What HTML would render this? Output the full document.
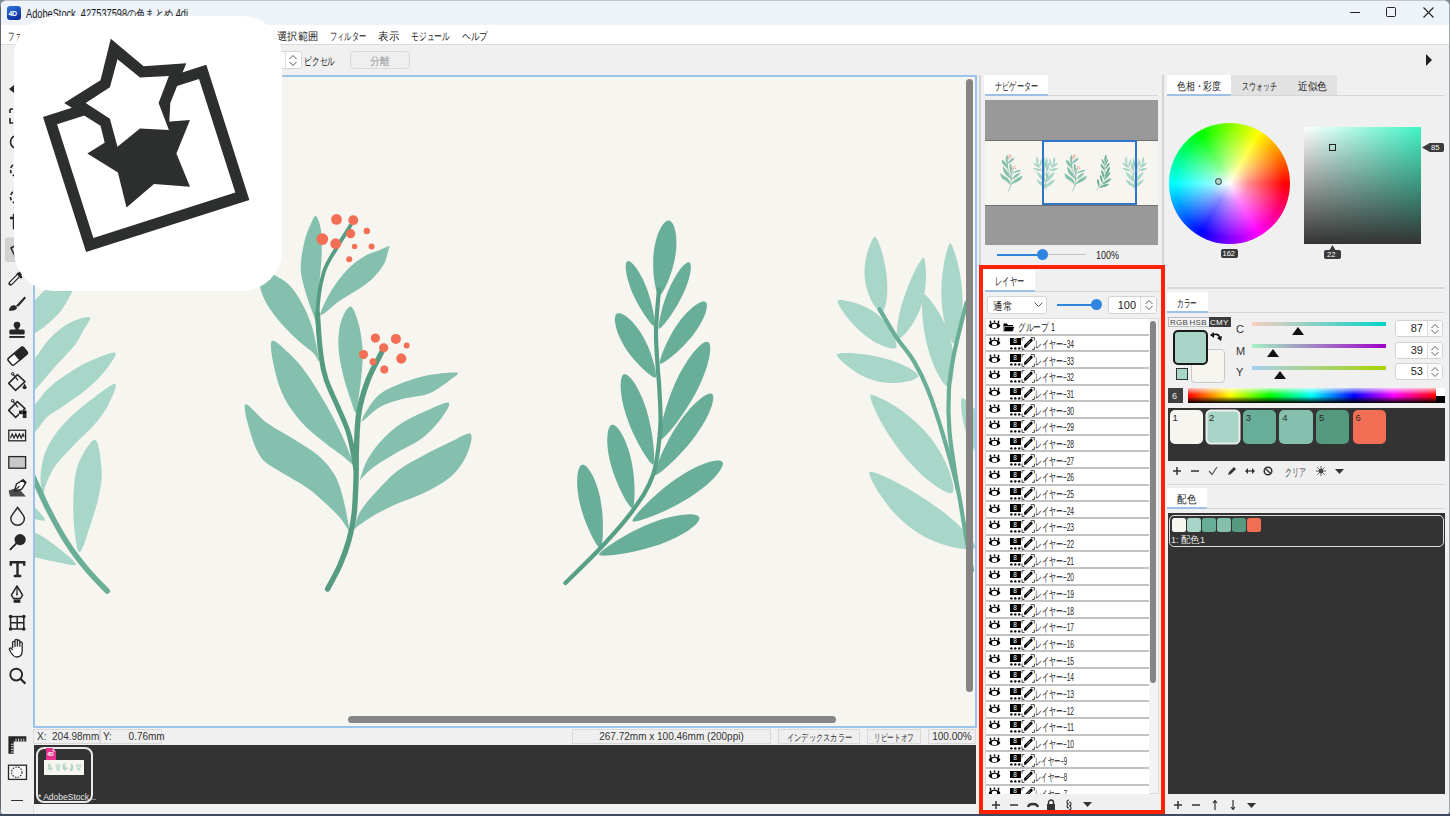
<!DOCTYPE html><html><head><meta charset="utf-8"><style>
*{box-sizing:border-box;margin:0;padding:0}
html,body{width:1450px;height:816px;overflow:hidden;background:#7f8d9b;font-family:"Liberation Sans",sans-serif;font-size:11px;color:#222}
.a{position:absolute}
.t{position:absolute;white-space:nowrap;line-height:1}
#win{position:absolute;left:0;top:0;width:1450px;height:815px;background:#f0f0f0;border-radius:8px 8px 6px 6px;overflow:hidden}
.sb{position:absolute;height:15px;border:1px solid #d9d9d9;background:#efefef;font-size:10px;color:#333;white-space:nowrap;line-height:13px;text-align:center}
</style></head><body>
<div id="win">
<div class="a" style="left:0px;top:0px;width:1450px;height:1px;background:#c3c7cc"></div>
<div class="a" style="left:0px;top:0px;width:1px;height:815px;background:#5f6670"></div>
<div class="a" style="left:1449px;top:0px;width:1px;height:815px;background:#9aa4ae"></div>
<div class="a" style="left:1px;top:1px;width:1448px;height:24px;background:#eef3fa"></div>
<div class="a" style="left:7px;top:6px;width:14px;height:14px;border-radius:3px;background:linear-gradient(160deg,#2d74da,#0a2796)"></div>
<div class="t" style="left:8.5px;top:9.5px;font-size:7px;color:#fff;font-weight:bold;letter-spacing:-0.5px">4D</div>
<svg class="a" style="left:26px;top:3.7px;overflow:visible" width="164" height="19.2"><text x="0" y="13.8" font-family="Liberation Sans, sans-serif" font-size="12" fill="#1b1b1b" textLength="162" lengthAdjust="spacingAndGlyphs" >AdobeStock_427537598の色まとめ.4di</text></svg>
<div class="a" style="left:1350px;top:12px;width:10px;height:1px;background:#222"></div>
<div class="a" style="left:1386px;top:7px;width:10px;height:10px;border:1px solid #222;border-radius:1.5px"></div>
<svg class="a" style="left:1423px;top:7px;" width="11" height="11" viewBox="0 0 11 11"><path d="M0.5,0.5L10.5,10.5M10.5,0.5L0.5,10.5" stroke="#222" stroke-width="1.1"/></svg>
<div class="a" style="left:1px;top:25px;width:1448px;height:19px;background:#fff"></div>
<div class="a" style="left:1px;top:44px;width:1448px;height:1px;background:#dcdcdc"></div>
<svg class="a" style="left:7.5px;top:27.9px;overflow:visible" width="28" height="16.8"><text x="0" y="12.1" font-family="Liberation Sans, sans-serif" font-size="10.5" fill="#1a1a1a" textLength="26" lengthAdjust="spacingAndGlyphs" >ファイル</text></svg>
<svg class="a" style="left:277px;top:27.9px;overflow:visible" width="43" height="16.8"><text x="0" y="12.1" font-family="Liberation Sans, sans-serif" font-size="10.5" fill="#1a1a1a" textLength="41" lengthAdjust="spacingAndGlyphs" >選択範囲</text></svg>
<svg class="a" style="left:330px;top:27.9px;overflow:visible" width="38" height="16.8"><text x="0" y="12.1" font-family="Liberation Sans, sans-serif" font-size="10.5" fill="#1a1a1a" textLength="36" lengthAdjust="spacingAndGlyphs" >フィルター</text></svg>
<svg class="a" style="left:378px;top:27.9px;overflow:visible" width="23" height="16.8"><text x="0" y="12.1" font-family="Liberation Sans, sans-serif" font-size="10.5" fill="#1a1a1a" textLength="21" lengthAdjust="spacingAndGlyphs" >表示</text></svg>
<svg class="a" style="left:411px;top:27.9px;overflow:visible" width="41" height="16.8"><text x="0" y="12.1" font-family="Liberation Sans, sans-serif" font-size="10.5" fill="#1a1a1a" textLength="39" lengthAdjust="spacingAndGlyphs" >モジュール</text></svg>
<svg class="a" style="left:462px;top:27.9px;overflow:visible" width="28" height="16.8"><text x="0" y="12.1" font-family="Liberation Sans, sans-serif" font-size="10.5" fill="#1a1a1a" textLength="26" lengthAdjust="spacingAndGlyphs" >ヘルプ</text></svg>
<div class="a" style="left:240px;top:51px;width:62px;height:18px;background:#fff;border:1px solid #d5d5d5;border-radius:3px"></div>
<div class="a" style="left:285px;top:52px;width:1px;height:16px;background:#e0e0e0"></div>
<svg class="a" style="left:288px;top:54px;" width="10" height="13" viewBox="0 0 10 13"><path d="M1.5,5L5,1.5L8.5,5M1.5,8L5,11.5L8.5,8" fill="none" stroke="#555" stroke-width="1"/></svg>
<svg class="a" style="left:304px;top:52.9px;overflow:visible" width="33" height="16.8"><text x="0" y="12.1" font-family="Liberation Sans, sans-serif" font-size="10.5" fill="#1a1a1a" textLength="31" lengthAdjust="spacingAndGlyphs" >ピクセル</text></svg>
<div class="a" style="left:350px;top:51px;width:60px;height:18px;border:1px solid #d8d8d8;border-radius:3px;background:#efefef"></div>
<svg class="a" style="left:370px;top:53.4px;overflow:visible" width="22" height="16.8"><text x="0" y="12.1" font-family="Liberation Sans, sans-serif" font-size="10.5" fill="#9a9a9a" textLength="20" lengthAdjust="spacingAndGlyphs" >分離</text></svg>
<svg class="a" style="left:1425px;top:54px;" width="8" height="12" viewBox="0 0 8 12"><path d="M1,0L7,6L1,12Z" fill="#222"/></svg>
<div class="a" style="left:33px;top:75px;width:943.5px;height:652.5px;border:2px solid #9cc3ea;background:#f7f5f0;overflow:hidden">
<svg class="a" style="left:-35px;top:-77px" width="1450" height="816"><g id="plants"><g id="pl1"><path d="M74,284C74.9,288.6 67.4,301.1 63.3,307.5C59.2,313.9 54.3,317.9 49.6,322.2C44.9,326.4 39.9,330.4 35,333C30.1,335.6 22.8,340.5 20,338C17.2,335.5 15.5,324.3 18,318C20.5,311.7 28.3,306.3 35,300C41.7,293.7 51.5,282.7 58,280C64.5,277.3 73.1,279.4 74,284Z" fill="#a8d6c8"/>
<path d="M89.8,317.3C92.1,318.6 85.5,326.4 83,331C80.5,335.6 79.7,338.8 75.1,344.7C70.5,350.6 62.2,358.8 55.5,366.3C48.8,373.8 41.1,383.5 34.9,389.8C28.6,396.1 20.8,406 18,404C15.2,402 15.2,385.6 18,378C20.8,370.4 29.6,364.9 34.9,358.4C40.2,351.9 43.9,344.7 49.6,338.8C55.3,332.9 62.5,326.7 69.2,323.1C75.9,319.5 87.5,316 89.8,317.3Z" fill="#a8d6c8"/>
<path d="M115.3,352.7C117.9,354.3 109.2,365.3 104.5,371.4C99.8,377.4 93.4,383.4 86.9,389C80.4,394.6 71.8,400.1 65.3,404.7C58.8,409.3 52.7,411.9 47.6,416.5C42.5,421.1 39.8,427.3 34.9,432.2C30,437.1 20.8,448 18,446C15.2,444 15.2,426.9 18,420C20.8,413.1 30,409.9 34.9,404.7C39.8,399.5 42.5,393.9 47.6,389C52.7,384.1 58.4,379.9 65.3,375.3C72.2,370.7 80.5,365.4 88.8,361.6C97.1,357.8 112.7,351.1 115.3,352.7Z" fill="#a8d6c8"/>
<path d="M115.3,384.1C117.6,385.4 111.8,398 108.4,404.7C105,411.4 100.6,417.4 94.7,424.3C88.8,431.2 79.6,439 73.1,445.9C66.6,452.8 60.1,459 55.5,465.5C50.9,472 47.8,479.9 45.7,485.1C43.7,490.4 44,496.9 43.2,497C42.4,497.1 41.4,489.9 41,486C40.6,482.1 40.2,478.7 40.8,473.3C41.4,467.9 42.2,460.2 44.7,453.7C47.2,447.2 50.8,440.6 55.5,434.1C60.2,427.6 66.6,420.7 73.1,414.5C79.6,408.3 87.7,402 94.7,396.9C101.7,391.8 113,382.8 115.3,384.1Z" fill="#a8d6c8"/>
<path d="M95.1,439.9C99,440.7 101,460.8 101.7,470C102.4,479.2 100.6,486.7 99,495C97.4,503.3 95.2,510.5 92,520C88.8,529.5 82.9,550.3 80,552C77.1,553.7 75.6,539.2 74.5,530C73.4,520.8 72.9,507.8 73.5,497C74.1,486.2 74.4,474.5 78,465C81.6,455.5 91.1,439.1 95.1,439.9Z" fill="#a8d6c8"/>
<path d="M20,530C22.4,526.8 29.1,530.4 34.4,532.6C39.7,534.8 45.1,537.8 52,543C58.9,548.2 75.2,560.8 76,564C76.8,567.2 63.4,563.2 56.5,562C49.6,560.8 40.5,558.7 34.4,557C28.3,555.3 22.4,556.5 20,552C17.6,547.5 17.6,533.2 20,530Z" fill="#a8d6c8"/>
<path d="M25,495C27,494 30.7,501.8 34,506C37.3,510.2 45.3,518 45,520C44.7,522 35.8,519.3 32,518C28.2,516.7 23.2,515.8 22,512C20.8,508.2 23,496 25,495Z" fill="#a8d6c8"/>
<path d="M22,455C24.1,459.1 30.1,470.7 34.4,479.6C38.7,488.5 42.2,497.6 47.7,508.3C53.2,519 60.9,533.3 67.5,543.6C74.1,553.9 80.8,562.2 87.4,570.1C94,578 104,587.6 107.3,591.1" fill="none" stroke="#6aae98" stroke-width="5.5" stroke-linecap="round" stroke-linejoin="round"/>
</g><g id="pl2">
<path d="M316,216.2C317.7,217.1 319.9,223.4 320.9,229.7C321.8,236 321.9,245.4 321.7,253.9C321.5,262.4 320.3,272.8 319.6,280.9C318.9,289 318.1,295.8 317.7,302.5C317.2,309.2 317.7,319.6 316.9,321.4C316.1,323.2 314.8,318.7 312.8,313.3C310.8,307.9 306.7,296.6 304.7,289C302.7,281.4 300.7,275.5 300.7,267.4C300.7,259.3 303,247.7 304.7,240.5C306.4,233.3 308.8,228.4 310.7,224.3C312.6,220.2 314.3,215.3 316,216.2Z" fill="#84c0ad"/>
<path d="M388.9,246.3C387.4,246.2 383,248.8 379.3,250.2C375.6,251.6 370.9,252.7 366.6,255C362.4,257.3 357.8,260.5 353.8,263.8C349.8,267.1 346.1,271 342.6,275C339.2,279 336,283.2 333.1,287.7C330.2,292.2 327.2,297.6 325.1,302.1C323,306.6 320,313.2 320.3,314.8C320.6,316.4 323.8,313.7 326.7,311.6C329.6,309.5 333.8,305 337.8,302.1C341.8,299.2 346.3,296.8 350.6,294.1C354.9,291.4 359.4,289 363.4,286.1C367.4,283.2 371.1,280.3 374.5,276.6C377.9,272.9 381.8,268.1 384.1,263.8C386.4,259.5 387.3,253.9 388.1,251C388.9,248.1 390.4,246.4 388.9,246.3Z" fill="#84c0ad"/>
<path d="M262,270C264.4,268.4 269.8,272.4 274.3,274.9C278.8,277.3 284.5,280.2 289,284.7C293.5,289.2 297.6,295.4 301.3,301.9C305,308.4 308.7,317 311.1,323.9C313.6,330.8 314.7,337.3 316,343.5C317.3,349.7 319.4,359.4 319,361C318.6,362.6 316.9,356.6 313.5,353.3C310.1,350 304.1,346 298.8,341.1C293.5,336.2 287,330 281.7,323.9C276.4,317.8 270.7,310.8 267,304.3C263.3,297.8 260.4,290.4 259.6,284.7C258.8,279 259.6,271.6 262,270Z" fill="#84c0ad"/>
<path d="M350.6,306.5C353.5,306.9 356.7,316.7 358.7,324.1C360.7,331.5 362.2,342.5 362.7,351C363.1,359.5 362.1,367.7 361.4,375.3C360.7,382.9 359.6,390.6 358.7,396.9C357.8,403.2 357.4,412.6 356,413C354.6,413.4 352.9,406.3 350.6,399.6C348.4,392.9 344.5,381.6 342.5,372.6C340.5,363.6 338.6,354.1 338.4,345.6C338.2,337.1 339.1,327.9 341.1,321.4C343.1,314.9 347.7,306.1 350.6,306.5Z" fill="#84c0ad"/>
<path d="M271.9,341.1C274.3,338.7 283.3,348 289,353.3C294.7,358.6 300.5,365.1 306.2,372.9C311.9,380.7 318,390.9 323.3,399.9C328.6,408.9 333.9,418.7 338,426.9C342.1,435.1 345.3,442.7 347.8,448.9C350.3,455.1 353.8,462.8 353,464C352.2,465.2 347.9,460 343,456.3C338.1,452.6 330.2,447.3 323.3,441.6C316.4,435.9 307.8,429.4 301.3,422C294.8,414.6 288.6,406.5 284.1,397.5C279.6,388.5 276.3,377.4 274.3,368C272.3,358.6 269.4,343.6 271.9,341.1Z" fill="#84c0ad"/>
<path d="M245.4,404.3C248.1,402.5 258.9,417.3 267,423.1C275.1,428.9 285.4,433.9 293.9,439.3C302.4,444.7 311.4,449.6 318.2,455.5C324.9,461.4 330.3,467.6 334.4,474.4C338.4,481.1 340,487 342.5,496C345,505 348.5,523.1 349.2,528.3C349.9,533.5 348.1,528.8 346.5,527C344.9,525.2 343.2,521.3 339.8,517.5C336.4,513.7 331.7,509 326.3,504.1C320.9,499.2 315,493.3 307.4,487.9C299.8,482.5 288.1,476.6 280.5,471.7C272.9,466.8 266.6,464.5 261.6,458.2C256.7,451.9 253.5,442.9 250.8,433.9C248.1,424.9 242.7,406.1 245.4,404.3Z" fill="#84c0ad"/>
<path d="M457,372.6C453.5,371.8 438.2,373.3 429,375C419.8,376.7 410.2,379.8 402,383C393.8,386.2 385.8,389.5 380,394C374.2,398.5 370,405.7 367,410C364,414.3 362.5,418.3 362,420C361.5,421.7 361,422.2 364,420C367,417.8 373.7,410.5 380,407C386.3,403.5 393.8,401.2 402,399C410.2,396.8 421,396.7 429,393.5C437,390.3 445.3,383.5 450,380C454.7,376.5 460.5,373.4 457,372.6Z" fill="#84c0ad"/>
<path d="M449,402.9C447.2,401.1 436.7,406.3 428.8,409.7C420.9,413.1 409.9,417.7 401.8,423.1C393.7,428.5 386,435.7 380.2,442C374.4,448.3 370.2,454.6 366.8,460.9C363.4,467.2 360.7,477.1 360,479.8C359.3,482.5 360.2,479.4 362.7,477.1C365.2,474.9 369.2,470.4 374.8,466.3C380.4,462.2 388.8,457.3 396.4,452.8C404,448.3 413.5,444.7 420.7,439.3C427.9,433.9 434.9,426.6 439.6,420.5C444.3,414.4 450.8,404.7 449,402.9Z" fill="#84c0ad"/>
<path d="M470.6,433.9C467.9,431.6 458.3,438.4 450.4,442C442.5,445.6 432.4,450.6 423.4,455.5C414.4,460.4 404.5,465.4 396.4,471.7C388.3,478 380.9,486.6 374.8,493.3C368.7,500 363.4,506.3 360,512.1C356.6,517.9 354.8,526 354.6,528.3C354.4,530.5 355.3,527.9 358.7,525.6C362.1,523.4 368.5,518.4 374.8,514.8C381.1,511.2 388.3,507.7 396.4,504.1C404.5,500.5 414.4,497.8 423.4,493.3C432.4,488.8 443.2,483.4 450.4,477.1C457.6,470.8 463.1,462.7 466.5,455.5C469.9,448.3 473.3,436.1 470.6,433.9Z" fill="#84c0ad"/>
<path d="M327.6,589C329.7,585 336.4,573.2 340,565C343.6,556.8 346.7,548.3 349,540C351.3,531.7 352.8,525 354,515C355.2,505 355.6,491.3 356,480C356.4,468.7 356,458.3 356.5,447C357,435.7 357.1,423.2 359,412C360.9,400.8 364.2,389.9 368,380C371.8,370.1 379.3,357 381.6,352.4" fill="none" stroke="#559c83" stroke-width="5.4" stroke-linecap="round" stroke-linejoin="round"/>
<path d="M356,470C354.6,463.5 352.8,446 347.9,431C342.9,416 330.9,393.3 326.3,380C321.7,366.7 322,362.2 320.5,351C319,339.8 318,319.3 317.5,313" fill="none" stroke="#559c83" stroke-width="5" stroke-linecap="round" stroke-linejoin="round"/>
<path d="M320.5,351C320,344.7 317,326 317.5,313C318,300 320.3,283.8 323.6,272.8C326.9,261.8 332.6,255.1 337.1,247.2C341.6,239.3 348.4,229.2 350.6,225.6" fill="none" stroke="#559c83" stroke-width="3.8" stroke-linecap="round" stroke-linejoin="round"/>
<circle cx="336.5" cy="219.4" r="5.4" fill="#f26e55"/>
<circle cx="353.3" cy="220.2" r="4.9" fill="#f26e55"/>
<circle cx="322.3" cy="239.1" r="5.9" fill="#f26e55"/>
<circle cx="335.7" cy="243.7" r="5.4" fill="#f26e55"/>
<circle cx="350.6" cy="233.7" r="4.6" fill="#f26e55"/>
<circle cx="366.8" cy="231" r="3.2" fill="#f26e55"/>
<circle cx="354.6" cy="246.4" r="2.7" fill="#f26e55"/>
<circle cx="371.6" cy="246.4" r="3" fill="#f26e55"/>
<circle cx="349.2" cy="259.3" r="3" fill="#f26e55"/>
<circle cx="375.4" cy="338.1" r="4.6" fill="#f26e55"/>
<circle cx="395.9" cy="338.9" r="5" fill="#f26e55"/>
<circle cx="406.7" cy="345.6" r="3" fill="#f26e55"/>
<circle cx="383.7" cy="347.8" r="4.6" fill="#f26e55"/>
<circle cx="363.5" cy="354.5" r="4.6" fill="#f26e55"/>
<circle cx="373" cy="361.8" r="3.5" fill="#f26e55"/>
<circle cx="401.3" cy="358.6" r="5.1" fill="#f26e55"/>
<circle cx="384.3" cy="369.4" r="4" fill="#f26e55"/>
</g><g id="pl3">
<path d="M659,296.2L659.6,295.9L660.5,295.1L661.7,293.6L663,291.6L664.4,289L666,285.8L667.6,282.3L669.2,278.3L670.7,274L672.2,269.4L673.5,264.6L674.7,259.8L675.5,254.8L676.1,250L676.4,245.3L676.4,240.7L676.2,236.5L675.6,232.7L674.9,229.2L674,226.3L672.9,223.9L671.7,222.2L670.4,221L669,220.5L667.5,220.6L666,221.4L664.3,222.8L662.7,224.8L661,227.4L659.4,230.5L657.9,234.1L656.6,238.1L655.4,242.5L654.5,247.1L653.8,252L653.3,256.9L653.2,261.9L653.2,266.9L653.4,271.7L653.8,276.3L654.3,280.5L655,284.4L655.6,287.8L656.3,290.7L657.1,293L657.8,294.7L658.5,295.8Z" fill="#68ae98"/>
<path d="M654.3,326.4L654.5,326L654.7,324.9L654.7,323.3L654.6,321.2L654.3,318.5L653.9,315.4L653.3,311.9L652.5,308.1L651.5,304L650.4,299.8L649.1,295.4L647.7,291L646.1,286.7L644.3,282.5L642.5,278.6L640.5,274.9L638.5,271.6L636.6,268.6L634.7,266.1L632.9,264.1L631.2,262.6L629.8,261.6L628.5,261.1L627.5,261.2L626.7,261.9L626.1,263.1L625.8,264.8L625.7,267L625.9,269.7L626.3,272.9L626.9,276.3L627.9,280.1L629.1,284.1L630.5,288.2L632.2,292.4L634.1,296.6L636.2,300.7L638.3,304.7L640.5,308.5L642.7,312.1L644.9,315.4L646.9,318.3L648.7,320.8L650.4,322.9L651.8,324.5L653,325.6L653.8,326.3Z" fill="#68ae98"/>
<path d="M659,328.8L659.5,328.7L660.4,328.1L661.6,326.9L663.1,325.3L664.9,323.2L666.9,320.7L669.1,317.7L671.4,314.4L673.8,310.8L676.2,306.9L678.6,302.8L680.8,298.6L682.9,294.4L684.9,290.1L686.5,285.9L687.9,281.8L689.1,278L689.9,274.4L690.5,271.2L690.8,268.5L690.8,266.1L690.6,264.4L690.1,263.1L689.3,262.4L688.3,262.3L687,262.7L685.5,263.7L683.7,265.2L681.8,267.3L679.8,269.8L677.7,272.8L675.5,276.2L673.4,279.9L671.3,283.9L669.3,288.2L667.5,292.6L665.8,297L664.3,301.5L662.9,305.8L661.8,310L660.8,313.9L660,317.5L659.4,320.7L658.9,323.4L658.7,325.6L658.7,327.3L658.8,328.4Z" fill="#68ae98"/>
<path d="M655.5,377.7L655.8,377.1L656,375.9L655.9,374.1L655.7,371.8L655.2,368.9L654.4,365.6L653.4,361.9L652.2,357.9L650.8,353.6L649.1,349.2L647.2,344.8L645.1,340.4L642.7,336.1L640.2,332L637.6,328.2L634.8,324.7L632.1,321.6L629.3,319L626.7,316.8L624.2,315.1L622,313.9L620,313.3L618.4,313.2L617,313.6L616,314.6L615.3,316.1L614.9,318.2L614.9,320.7L615.3,323.7L616,327L617,330.7L618.4,334.6L620.2,338.6L622.3,342.7L624.7,346.9L627.4,350.9L630.3,354.9L633.4,358.7L636.5,362.2L639.5,365.5L642.5,368.4L645.3,371L647.9,373.3L650.2,375.1L652.1,376.4L653.7,377.3L654.9,377.7Z" fill="#68ae98"/>
<path d="M660.1,363.7L660.7,363.7L661.8,363.4L663.5,362.5L665.5,361.3L667.9,359.6L670.6,357.5L673.6,355L676.9,352.2L680.2,349.1L683.6,345.8L687,342.1L690.3,338.4L693.5,334.5L696.3,330.5L698.9,326.5L701.2,322.6L703.1,318.8L704.6,315.2L705.8,312L706.5,309L706.9,306.6L706.8,304.5L706.4,303L705.6,302L704.4,301.5L702.8,301.6L700.9,302.1L698.6,303.2L696,304.8L693.3,306.8L690.3,309.4L687.3,312.3L684.2,315.6L681.1,319.3L678.2,323.2L675.4,327.3L672.7,331.6L670.3,335.9L668.1,340.2L666.1,344.3L664.4,348.2L662.9,351.8L661.7,355L660.8,357.8L660.2,360.2L659.9,361.9L659.9,363.1Z" fill="#68ae98"/>
<path d="M660,440L660.7,439.8L662.1,439L664,437.3L666.4,435L669.1,431.9L672.3,428.2L675.7,423.9L679.3,419.1L683,413.8L686.8,408.1L690.5,402.1L694.1,395.9L697.4,389.7L700.5,383.3L703.1,377.1L705.4,371.1L707.2,365.4L708.6,360.1L709.6,355.3L710.1,351.2L710.2,347.7L709.9,345L709.2,343.1L708,342L706.4,341.8L704.5,342.3L702.1,343.7L699.4,345.9L696.5,348.9L693.3,352.6L690,356.9L686.6,361.9L683.2,367.4L679.9,373.3L676.8,379.6L673.9,386.1L671.2,392.7L668.8,399.3L666.6,405.7L664.7,411.9L663.1,417.8L661.8,423.1L660.8,427.8L660.1,431.9L659.6,435.2L659.5,437.7L659.7,439.3Z" fill="#68ae98"/>
<path d="M653,464.7L653.4,464.1L653.8,462.8L654,460.6L654.1,457.7L654,454.1L653.8,449.8L653.4,445.1L652.8,439.8L652,434.2L651,428.4L649.7,422.4L648.3,416.3L646.6,410.3L644.7,404.6L642.6,399L640.4,393.9L638,389.2L635.7,385.1L633.3,381.5L631.1,378.6L629,376.4L627.1,374.9L625.4,374.2L624,374.2L622.8,375L621.9,376.6L621.2,378.9L620.8,381.9L620.6,385.6L620.8,389.8L621.3,394.6L622.1,399.7L623.3,405.2L624.8,410.9L626.6,416.7L628.7,422.6L631,428.4L633.5,434L636.1,439.3L638.7,444.3L641.3,448.9L643.7,453.1L646,456.6L648,459.6L649.8,461.9L651.3,463.6L652.4,464.5Z" fill="#68ae98"/>
<path d="M655,475L655.7,475L657,474.4L659,473.2L661.4,471.4L664.4,469.1L667.7,466.2L671.4,462.8L675.3,459L679.4,454.8L683.6,450.3L687.8,445.4L691.9,440.4L695.8,435.2L699.4,430L702.7,424.8L705.6,419.8L708,414.9L710,410.4L711.6,406.2L712.6,402.6L713.2,399.5L713.3,397L712.9,395.1L712,394L710.6,393.5L708.8,393.8L706.5,394.7L703.7,396.3L700.7,398.5L697.3,401.4L693.7,404.8L689.9,408.7L686.1,413.2L682.3,418L678.6,423.2L675.1,428.6L671.8,434.1L668.6,439.7L665.8,445.2L663.2,450.5L660.9,455.5L659,460.1L657.4,464.2L656.2,467.7L655.4,470.6L654.9,472.9L654.8,474.3Z" fill="#68ae98"/>
<path d="M632.4,508.4L632.8,507.9L633.3,506.7L633.8,504.7L634.1,502L634.4,498.7L634.5,494.9L634.6,490.5L634.4,485.7L634.1,480.6L633.7,475.2L633,469.7L632.1,464.1L630.9,458.6L629.6,453.3L628,448.2L626.2,443.4L624.4,439.1L622.4,435.2L620.4,431.8L618.5,429.1L616.6,427L614.8,425.6L613.2,424.8L611.8,424.8L610.5,425.5L609.5,426.9L608.6,429L607.9,431.7L607.5,435L607.2,438.9L607.3,443.3L607.7,448L608.3,453L609.3,458.3L610.6,463.7L612.1,469.1L613.9,474.4L615.9,479.6L617.9,484.6L620.1,489.3L622.2,493.6L624.2,497.4L626.1,500.8L627.9,503.6L629.5,505.8L630.8,507.3L631.8,508.2Z" fill="#68ae98"/>
<path d="M632.4,521.3L633.1,521.5L634.7,521.5L637.2,521.1L640.4,520.3L644.3,519.1L648.8,517.5L653.9,515.5L659.4,513.3L665.2,510.7L671.3,507.7L677.5,504.5L683.6,501.1L689.6,497.4L695.4,493.6L700.8,489.6L705.7,485.7L710.2,481.7L714,477.9L717.2,474.3L719.7,471L721.5,468.1L722.6,465.6L722.9,463.6L722.5,462.1L721.3,461.1L719.3,460.6L716.6,460.6L713.2,461.1L709.2,462.1L704.6,463.6L699.6,465.6L694.2,468.1L688.6,471.1L682.8,474.5L677,478.2L671.3,482.3L665.7,486.6L660.3,491L655.2,495.4L650.5,499.7L646.2,503.9L642.4,507.8L639.2,511.3L636.5,514.4L634.5,517L633.1,519.1L632.5,520.6Z" fill="#68ae98"/>
<path d="M600.2,548.3L600.6,547.8L601.2,546.6L601.7,544.7L602.1,542L602.5,538.8L602.8,534.9L602.9,530.6L602.9,525.8L602.8,520.7L602.5,515.4L602,509.9L601.2,504.3L600.3,498.8L599.1,493.5L597.7,488.4L596.1,483.6L594.3,479.2L592.5,475.3L590.6,471.9L588.7,469.2L586.9,467L585.2,465.5L583.6,464.8L582.2,464.7L580.9,465.3L579.8,466.7L578.9,468.7L578.1,471.4L577.5,474.7L577.2,478.6L577.1,482.9L577.3,487.6L577.9,492.6L578.7,497.9L579.8,503.3L581.2,508.7L582.8,514L584.6,519.2L586.5,524.3L588.5,529L590.5,533.3L592.4,537.2L594.2,540.6L595.9,543.4L597.3,545.6L598.6,547.2L599.6,548.1Z" fill="#68ae98"/>
<path d="M598.9,554.8L599.5,555.2L601.1,555.5L603.6,555.7L606.9,555.6L610.9,555.3L615.6,554.8L621,554L626.8,553L633.1,551.8L639.6,550.3L646.3,548.6L653,546.6L659.7,544.4L666.1,542L672.2,539.3L677.9,536.6L683,533.7L687.6,530.9L691.5,528.1L694.7,525.5L697.1,523.1L698.6,520.9L699.4,519L699.3,517.4L698.3,516.1L696.5,515.2L693.9,514.6L690.5,514.3L686.4,514.4L681.6,514.9L676.3,515.7L670.5,516.9L664.4,518.5L658.1,520.5L651.6,522.9L645.2,525.6L638.8,528.5L632.6,531.5L626.7,534.7L621.2,537.9L616.1,540.9L611.6,543.9L607.7,546.6L604.4,549L601.9,551.1L600.1,552.8L599.1,554.1Z" fill="#68ae98"/>
<path d="M659,289C658.5,296 656.2,317.8 656,331C655.8,344.2 657.2,358.6 657.8,368.4C658.4,378.2 659,380 659.4,390C659.8,400 661.3,414.4 660.2,428.6C659.1,442.8 657.6,461.3 653,475C648.4,488.7 641,499 632.4,511C623.8,523 612.7,535 601.5,547C590.3,559 571.4,577 565.4,583" fill="none" stroke="#579f87" stroke-width="4.2" stroke-linecap="round" stroke-linejoin="round"/>
</g><g id="pl4">
<path d="M881.5,312.6L882.2,312.2L883.1,311.2L884,309.5L884.9,307.2L885.7,304.3L886.4,300.9L886.9,297.1L887.2,292.9L887.3,288.4L887.2,283.7L886.9,278.8L886.4,273.8L885.7,268.9L884.8,264L883.8,259.4L882.8,255L881.6,250.9L880.4,247.2L879.2,244L878.1,241.3L877,239.2L876.1,237.7L875.3,236.8L874.8,236.5L874.3,236.9L873.5,237.9L872.4,239.6L871.3,241.9L870,244.8L868.8,248.3L867.5,252.1L866.4,256.4L865.5,261L864.8,265.8L864.5,270.7L864.6,275.7L865.1,280.7L865.9,285.6L867.2,290.2L868.7,294.6L870.4,298.6L872.3,302.2L874.2,305.3L876.1,307.9L877.8,310L879.4,311.5L880.6,312.3Z" fill="#a8d6c8"/>
<path d="M898.3,339L899.1,338.9L900.4,338.1L902.1,336.8L904.2,334.8L906.4,332.3L908.9,329.2L911.5,325.6L914,321.5L916.5,317.1L918.8,312.2L920.8,307.1L922.5,301.8L923.8,296.4L924.8,291L925.5,285.7L925.8,280.5L926,275.7L925.9,271.3L925.7,267.4L925.3,264L924.9,261.3L924.5,259.3L924,258L923.7,257.5L923.2,257.7L922.3,258.6L921.1,260.1L919.7,262.2L918,265L916.2,268.3L914.3,272.1L912.3,276.3L910.3,280.9L908.3,285.8L906.3,290.9L904.4,296.2L902.7,301.5L901.1,306.8L899.8,311.9L898.7,316.8L897.9,321.4L897.3,325.6L897,329.3L896.9,332.6L897,335.2L897.3,337.2L897.8,338.5Z" fill="#a8d6c8"/>
<path d="M896.1,347.9L896.4,347L896.5,345.4L896.2,343.2L895.5,340.6L894.5,337.6L893,334.2L891.2,330.6L888.9,326.9L886.2,323.3L883.1,319.7L879.6,316.3L875.9,313.2L871.8,310.4L867.5,308L863.2,305.9L858.9,304.2L854.8,302.8L850.9,301.7L847.4,300.9L844.3,300.4L841.7,300.1L839.7,300.1L838.3,300.3L837.7,300.5L837.6,301.1L837.9,302.3L838.5,304.1L839.6,306.2L841,308.8L842.9,311.6L845.1,314.7L847.7,318.1L850.6,321.5L853.7,325L857.2,328.4L860.8,331.7L864.6,334.9L868.4,337.8L872.3,340.4L876.1,342.7L879.8,344.6L883.3,346.1L886.6,347.3L889.4,348.1L891.9,348.5L893.9,348.6L895.3,348.3Z" fill="#a8d6c8"/>
<path d="M918.2,376.5L918.1,375.6L917.3,374.3L915.9,372.8L913.8,371L911.1,369.2L907.9,367.3L904.1,365.4L899.8,363.5L895.2,361.7L890.2,360.1L885,358.6L879.6,357.2L874.2,356.1L868.9,355.1L863.7,354.3L858.7,353.7L854.1,353.3L849.8,353L846.1,352.9L842.9,353L840.3,353.3L838.3,353.7L837.1,354.1L836.6,354.5L836.8,355.2L837.6,356.4L838.9,358.2L840.9,360.3L843.4,362.7L846.5,365.3L850.1,368.1L854.1,370.9L858.4,373.7L863.2,376.2L868.2,378.5L873.4,380.3L878.7,381.7L884.1,382.6L889.4,383.1L894.5,383.1L899.4,382.8L903.9,382.1L907.9,381.3L911.3,380.4L914.1,379.3L916.2,378.3L917.6,377.3Z" fill="#a8d6c8"/>
<path d="M953.5,343.5L954.2,343L955.2,341.7L956.3,339.6L957.5,336.6L958.6,332.9L959.7,328.6L960.7,323.6L961.5,318.1L962.1,312.2L962.5,306L962.5,299.5L962.3,293L961.8,286.4L961,280L960,273.8L958.8,267.9L957.6,262.5L956.3,257.6L954.9,253.3L953.7,249.7L952.5,246.8L951.5,244.8L950.7,243.5L950.2,243.1L949.7,243.5L949,244.9L948.1,247L947.2,249.9L946.1,253.6L945.1,258L944.1,263L943.2,268.5L942.4,274.4L941.8,280.6L941.5,287.1L941.4,293.6L941.6,300.2L942.1,306.6L942.8,312.8L943.8,318.7L945,324.1L946.3,329L947.7,333.3L949.1,336.9L950.4,339.8L951.6,341.8L952.7,343.1Z" fill="#a8d6c8"/>
<path d="M949,387.5L949.7,386.9L950.7,385.3L951.5,383L952.4,379.9L953,376L953.5,371.6L953.8,366.6L953.8,361.1L953.4,355.3L952.6,349.3L951.4,343.2L949.8,337.1L947.7,331.1L945.4,325.3L942.8,319.8L940,314.6L937.2,309.9L934.4,305.7L931.8,302.1L929.4,299.1L927.3,296.7L925.6,295.1L924.4,294.2L923.7,293.9L923.3,294.4L922.8,295.8L922.5,298.1L922.2,301L922,304.7L922.1,309L922.3,313.9L922.7,319.3L923.4,325L924.2,331L925.3,337.1L926.7,343.3L928.3,349.4L930.1,355.4L932.1,361.1L934.2,366.4L936.5,371.2L938.7,375.6L940.9,379.3L943,382.4L945,384.8L946.7,386.4L948.1,387.3Z" fill="#a8d6c8"/>
<path d="M952.6,493L953.2,491.8L953.4,489.5L953.2,486.2L952.4,482L951.2,477L949.3,471.3L946.9,465.2L943.8,458.6L940.2,451.9L935.9,445.2L931.1,438.5L925.7,432.1L920,426L913.9,420.4L907.7,415.2L901.6,410.6L895.6,406.6L889.9,403.1L884.8,400.2L880.2,397.9L876.4,396.3L873.5,395.3L871.4,394.8L870.5,394.9L870.3,395.8L870.5,397.7L871.3,400.6L872.6,404.3L874.5,408.8L876.9,414L879.8,419.7L883.3,425.9L887.2,432.4L891.5,439.1L896.3,445.9L901.3,452.5L906.6,459L912.1,465.1L917.6,470.8L923.1,476L928.5,480.6L933.6,484.5L938.3,487.7L942.6,490.2L946.2,492L949.2,493L951.4,493.3Z" fill="#a8d6c8"/>
<path d="M975,548L975.2,546.8L974.6,544.7L973.3,541.9L971,538.6L968,534.7L964.1,530.4L959.5,525.9L954.3,521L948.4,516.1L942.1,511.1L935.3,506.2L928.3,501.3L921.2,496.7L914.1,492.3L907.2,488.1L900.5,484.4L894.1,481L888.3,478.2L883.1,475.8L878.6,474L874.8,472.8L872,472.1L870,471.9L869.2,472.1L869.2,473.1L869.7,475.2L870.9,478.2L872.7,482.1L875.2,486.8L878.4,492L882.2,497.7L886.6,503.8L891.5,509.9L897.1,516L903.2,521.8L909.8,527.2L916.7,532.1L923.9,536.4L931.3,540L938.5,543L945.6,545.3L952.2,547.1L958.2,548.3L963.5,549L968,549.3L971.4,549.2L973.8,548.7Z" fill="#a8d6c8"/>
<path d="M995,470L995.6,469.4L996.1,468L996.6,466L996.8,463.3L996.8,460.2L996.6,456.5L996,452.5L995.2,448.1L994,443.6L992.5,438.9L990.6,434.1L988.5,429.4L986,424.9L983.4,420.5L980.6,416.4L977.7,412.6L974.9,409.1L972.1,406.1L969.6,403.5L967.3,401.4L965.4,399.8L963.8,398.7L962.6,398.1L962,398L961.7,398.5L961.4,399.8L961.2,401.7L961.1,404.3L961.2,407.4L961.5,411L962,415L962.8,419.4L963.8,424.1L965.1,428.9L966.7,433.7L968.5,438.6L970.7,443.3L973.1,447.8L975.6,452L978.3,455.9L981.1,459.3L983.8,462.4L986.4,465L988.8,467L990.9,468.6L992.7,469.6L994.1,470Z" fill="#a8d6c8"/>
<path d="M879.6,309.3C882.4,313.9 890.4,328.2 896.1,336.8C901.8,345.4 908.5,352.2 913.8,361.1C919.1,370 923.2,377.8 928,390C932.8,402.2 937.9,417.8 942.8,434.1C947.7,450.4 954,473.3 957.5,488C961,502.7 961.2,508.7 963.6,522.4C966,536.1 970.6,562.1 972,570" fill="none" stroke="#6aae98" stroke-width="4.2" stroke-linecap="round" stroke-linejoin="round"/>
<path d="M966.5,303C966,305 965.6,305.9 963.4,314.8C961.2,323.8 955.9,344.2 953.5,356.7C951.1,369.2 949.6,377.5 948.9,390C948.2,402.5 948.1,415.4 949.5,431.7C950.9,448 956.2,478.6 957.5,488" fill="none" stroke="#6aae98" stroke-width="4.2" stroke-linecap="round" stroke-linejoin="round"/></g></g></svg>
<div class="a" style="left:931px;top:2px;width:7px;height:613px;border-radius:4px;background:#858585"></div>
<div class="a" style="left:313px;top:639px;width:488px;height:7px;border-radius:4px;background:#858585"></div>
</div>
<div class="sb" style="left:33px;top:729px;width:67px;text-align:left;padding-left:3px">X:&nbsp; 204.98mm</div>
<div class="sb" style="left:100px;top:729px;width:62px;text-align:left;padding-left:2px">Y:&nbsp;&nbsp;&nbsp;&nbsp;&nbsp; 0.76mm</div>
<div class="sb" style="left:572px;top:729px;width:199px">267.72mm x 100.46mm (200ppi)</div>
<div class="sb" style="left:778px;top:729px;width:82px"></div>
<svg class="a" style="left:787px;top:729px;overflow:visible" width="67" height="16"><text x="0" y="11.5" font-family="Liberation Sans, sans-serif" font-size="10" fill="#333" textLength="65" lengthAdjust="spacingAndGlyphs" >インデックスカラー</text></svg>
<div class="sb" style="left:867px;top:729px;width:54px"></div>
<svg class="a" style="left:874px;top:729px;overflow:visible" width="42" height="16"><text x="0" y="11.5" font-family="Liberation Sans, sans-serif" font-size="10" fill="#333" textLength="40" lengthAdjust="spacingAndGlyphs" >リピートオフ</text></svg>
<div class="sb" style="left:928px;top:729px;width:48px">100.00%</div>
<div class="a" style="left:34px;top:745px;width:942px;height:59px;background:#333"></div>
<div class="a" style="left:35.5px;top:746.5px;width:57px;height:56px;border:2px solid #eaeaea;border-radius:8px"></div>
<div class="a" style="left:44px;top:759.7px;width:40px;height:15.1px;background:#f7f5f0"></div>
<svg class="a" style="left:44px;top:759.7px" width="40" height="15.1"><g transform="translate(12.85,-1.74) scale(0.0226)"><use href="#pl2"/><use href="#pl3"/><use href="#pl4full"/><use href="#pl2" transform="translate(-658,0)"/><use href="#pl4full" transform="translate(-911,0)"/></g></svg>
<svg class="a" style="left:45.5px;top:748px;" width="10" height="12" viewBox="0 0 10 12"><path d="M0,0H6.5L10,3.5V12H0Z" fill="#e6318c"/><path d="M6.5,0V3.5H10" fill="#f7a8cf"/><text x="1.2" y="7.6" font-size="5" font-weight="bold" fill="#fff" font-family="Liberation Sans, sans-serif">4D</text></svg>
<div class="t" style="left:38px;top:793px;font-size:8.5px;color:#e8e8e8;">* AdobeStock...</div>
<div class="a" style="left:34px;top:804px;width:942px;height:10px;background:#f2f2f2"></div>
<div class="a" style="left:33px;top:804px;width:1px;height:10px;background:#ddd"></div>
<div class="a" style="left:979px;top:75px;width:2px;height:190px;background:#d4d4d4"></div>
<div class="a" style="left:1162px;top:75px;width:2px;height:190px;background:#d4d4d4"></div>
<div class="a" style="left:984px;top:75px;width:64px;height:20px;background:#fff"></div>
<svg class="a" style="left:995px;top:77.9px;overflow:visible" width="45" height="16.8"><text x="0" y="12.1" font-family="Liberation Sans, sans-serif" font-size="10.5" fill="#1a1a1a" textLength="43" lengthAdjust="spacingAndGlyphs" >ナビゲーター</text></svg>
<div class="a" style="left:985px;top:95px;width:173px;height:1px;background:#d6d6d6"></div>
<div class="a" style="left:985px;top:94px;width:63px;height:2px;background:#9ec0e4"></div>
<div class="a" style="left:985px;top:100px;width:173px;height:145px;background:#999"></div>
<div class="a" style="left:985px;top:140px;width:173px;height:66px;background:#6e6e6e"></div>
<div class="a" style="left:985px;top:141px;width:173px;height:64px;background:#f7f5f0;overflow:hidden">
<svg class="a" style="left:0;top:0" width="173" height="64"><g transform="translate(55.6,-7.5) scale(0.0977)"><use href="#pl2"/><use href="#pl3"/><g id="pl4full"><use href="#pl4"/><use href="#pl4" transform="translate(1925,0) scale(-1,1)"/></g><use href="#pl2" transform="translate(-658,0)"/><use href="#pl4full" transform="translate(-911,0)"/></g></svg>
</div>
<div class="a" style="left:1042px;top:140px;width:95px;height:65px;border:2px solid #2f76c9"></div>
<div class="a" style="left:997px;top:254px;width:45px;height:2px;background:#2f84dd"></div>
<div class="a" style="left:1042px;top:254px;width:44px;height:1px;background:#c4c4c4"></div>
<div class="a" style="left:1037px;top:249px;width:11px;height:11px;background:#2f84dd;border-radius:50%"></div>
<svg class="a" style="left:1096px;top:247px;overflow:visible" width="25" height="16"><text x="0" y="11.5" font-family="Liberation Sans, sans-serif" font-size="10" fill="#222" textLength="23" lengthAdjust="spacingAndGlyphs" >100%</text></svg>
<div class="a" style="left:983px;top:269px;width:178px;height:541px;background:#f0f0f0"></div>
<div class="a" style="left:983px;top:270px;width:52px;height:21px;background:#fff"></div>
<svg class="a" style="left:995px;top:273.4px;overflow:visible" width="31" height="16.8"><text x="0" y="12.1" font-family="Liberation Sans, sans-serif" font-size="10.5" fill="#1a1a1a" textLength="29" lengthAdjust="spacingAndGlyphs" >レイヤー</text></svg>
<div class="a" style="left:985px;top:291px;width:174px;height:1px;background:#d6d6d6"></div>
<div class="a" style="left:985px;top:290px;width:50px;height:2px;background:#9ec0e4"></div>
<div class="a" style="left:987px;top:296px;width:60px;height:18px;background:#fff;border:1px solid #d6d6d6;border-radius:3px"></div>
<svg class="a" style="left:993px;top:297.9px;overflow:visible" width="21" height="16.8"><text x="0" y="12.1" font-family="Liberation Sans, sans-serif" font-size="10.5" fill="#1a1a1a" textLength="19" lengthAdjust="spacingAndGlyphs" >通常</text></svg>
<svg class="a" style="left:1034px;top:302px;" width="9" height="6" viewBox="0 0 9 6"><path d="M0.5,0.5L4.5,4.5L8.5,0.5" fill="none" stroke="#555" stroke-width="1"/></svg>
<div class="a" style="left:1057px;top:304px;width:39px;height:2px;background:#2f84dd"></div>
<div class="a" style="left:1091px;top:299px;width:11px;height:11px;background:#2f84dd;border-radius:50%"></div>
<div class="a" style="left:1108px;top:296px;width:49px;height:18px;background:#fff;border:1px solid #d3d3d3;border-radius:3px"></div><div class="a" style="left:1140px;top:297px;width:1px;height:16px;background:#dedede"></div><div class="a" style="left:1141px;top:297px;width:15px;height:16px;background:#f9f9f9"></div><svg class="a" style="left:1143.5px;top:299px;" width="10" height="12" viewBox="0 0 10 12"><path d="M1.5,5L5,1.5L8.5,5M1.5,7L5,10.5L8.5,7" fill="none" stroke="#666" stroke-width="1"/></svg><div class="t" style="left:1136px;top:299.5px;font-size:11px;color:#222;transform:translateX(-100%)">100</div>
<div class="a" style="left:985px;top:318px;width:174px;height:476px;background:#f4f4f4;border:1px solid #dcdcdc"></div>
<div class="a" style="left:986px;top:319px;width:163px;height:475px;overflow:hidden;background:#fff">
<div class="a" style="left:0px;top:14.6px;width:163px;height:2px;background:#c2c2c2"></div>
<svg class="a" style="left:2px;top:1.4px;" width="13" height="10" viewBox="0 0 13 10"><path d="M0.6,5.8C2.2,1.8 10.8,1.8 12.4,5.8C10.8,9.8 2.2,9.8 0.6,5.8Z" fill="#000"/><ellipse cx="6.5" cy="5.9" rx="2.7" ry="2.2" fill="#fff"/><path d="M2.6,3.6L2.4,0.8M6.5,2.6V0.4M10.4,3.6L10.6,0.8" stroke="#000" stroke-width="1.5"/></svg>
<svg class="a" style="left:17px;top:2.7px;" width="12" height="10" viewBox="0 0 12 10"><path d="M0.5,1.5H4L5,3H10V9.5H0.5Z" fill="#000"/><path d="M1.5,4.5H11.5L10,9.5H0.5Z" fill="#000" stroke="#fff" stroke-width="0.6"/></svg>
<svg class="a" style="left:32px;top:0.2px;overflow:visible" width="39" height="16.8"><text x="0" y="12.1" font-family="Liberation Sans, sans-serif" font-size="10.5" fill="#1a1a1a" textLength="37" lengthAdjust="spacingAndGlyphs" >グループ 1</text></svg>
<div class="a" style="left:0px;top:31.2px;width:163px;height:2px;background:#c2c2c2"></div>
<svg class="a" style="left:2px;top:18.1px;" width="13" height="10" viewBox="0 0 13 10"><path d="M0.6,5.8C2.2,1.8 10.8,1.8 12.4,5.8C10.8,9.8 2.2,9.8 0.6,5.8Z" fill="#000"/><ellipse cx="6.5" cy="5.9" rx="2.7" ry="2.2" fill="#fff"/><path d="M2.6,3.6L2.4,0.8M6.5,2.6V0.4M10.4,3.6L10.6,0.8" stroke="#000" stroke-width="1.5"/></svg>
<div class="a" style="left:23.5px;top:18.6px;width:11.6px;height:7.5px;background:#000"></div><div class="t" style="left:27.3px;top:19.2px;font-size:6.5px;color:#fff;">8</div><svg class="a" style="left:23.5px;top:27.6px;" width="12" height="3" viewBox="0 0 12 3"><circle cx="1.4" cy="1.4" r="1.2"/><circle cx="5.3" cy="1.4" r="1.2"/><circle cx="9.2" cy="1.4" r="1.2"/></svg><svg class="a" style="left:35px;top:18.1px;" width="14" height="13" viewBox="0 0 14 13"><path d="M1,3.5V0.6H3.5M11,12.4H13.4V9.5M9.6,0.6H13.4V3.5M1,9.5V12.4H3.5" fill="none" stroke="#000" stroke-width="0.7"/><path d="M4.6,8.8L10.2,3.2" stroke="#000" stroke-width="3" stroke-linecap="round"/><path d="M5.6,7.8L9.4,4" stroke="#fff" stroke-width="0.6"/><path d="M3,11L3.6,8.6L5.4,10.3Z" fill="#000"/></svg>
<svg class="a" style="left:48.5px;top:16.8px;overflow:visible" width="41" height="16.8"><text x="0" y="12.1" font-family="Liberation Sans, sans-serif" font-size="10.5" fill="#1a1a1a" textLength="39" lengthAdjust="spacingAndGlyphs" >レイヤー−34</text></svg>
<div class="a" style="left:0px;top:47.9px;width:163px;height:2px;background:#c2c2c2"></div>
<svg class="a" style="left:2px;top:34.8px;" width="13" height="10" viewBox="0 0 13 10"><path d="M0.6,5.8C2.2,1.8 10.8,1.8 12.4,5.8C10.8,9.8 2.2,9.8 0.6,5.8Z" fill="#000"/><ellipse cx="6.5" cy="5.9" rx="2.7" ry="2.2" fill="#fff"/><path d="M2.6,3.6L2.4,0.8M6.5,2.6V0.4M10.4,3.6L10.6,0.8" stroke="#000" stroke-width="1.5"/></svg>
<div class="a" style="left:23.5px;top:35.3px;width:11.6px;height:7.5px;background:#000"></div><div class="t" style="left:27.3px;top:35.9px;font-size:6.5px;color:#fff;">8</div><svg class="a" style="left:23.5px;top:44.3px;" width="12" height="3" viewBox="0 0 12 3"><circle cx="1.4" cy="1.4" r="1.2"/><circle cx="5.3" cy="1.4" r="1.2"/><circle cx="9.2" cy="1.4" r="1.2"/></svg><svg class="a" style="left:35px;top:34.8px;" width="14" height="13" viewBox="0 0 14 13"><path d="M1,3.5V0.6H3.5M11,12.4H13.4V9.5M9.6,0.6H13.4V3.5M1,9.5V12.4H3.5" fill="none" stroke="#000" stroke-width="0.7"/><path d="M4.6,8.8L10.2,3.2" stroke="#000" stroke-width="3" stroke-linecap="round"/><path d="M5.6,7.8L9.4,4" stroke="#fff" stroke-width="0.6"/><path d="M3,11L3.6,8.6L5.4,10.3Z" fill="#000"/></svg>
<svg class="a" style="left:48.5px;top:33.5px;overflow:visible" width="41" height="16.8"><text x="0" y="12.1" font-family="Liberation Sans, sans-serif" font-size="10.5" fill="#1a1a1a" textLength="39" lengthAdjust="spacingAndGlyphs" >レイヤー−33</text></svg>
<div class="a" style="left:0px;top:64.6px;width:163px;height:2px;background:#c2c2c2"></div>
<svg class="a" style="left:2px;top:51.4px;" width="13" height="10" viewBox="0 0 13 10"><path d="M0.6,5.8C2.2,1.8 10.8,1.8 12.4,5.8C10.8,9.8 2.2,9.8 0.6,5.8Z" fill="#000"/><ellipse cx="6.5" cy="5.9" rx="2.7" ry="2.2" fill="#fff"/><path d="M2.6,3.6L2.4,0.8M6.5,2.6V0.4M10.4,3.6L10.6,0.8" stroke="#000" stroke-width="1.5"/></svg>
<div class="a" style="left:23.5px;top:51.9px;width:11.6px;height:7.5px;background:#000"></div><div class="t" style="left:27.3px;top:52.5px;font-size:6.5px;color:#fff;">8</div><svg class="a" style="left:23.5px;top:60.9px;" width="12" height="3" viewBox="0 0 12 3"><circle cx="1.4" cy="1.4" r="1.2"/><circle cx="5.3" cy="1.4" r="1.2"/><circle cx="9.2" cy="1.4" r="1.2"/></svg><svg class="a" style="left:35px;top:51.4px;" width="14" height="13" viewBox="0 0 14 13"><path d="M1,3.5V0.6H3.5M11,12.4H13.4V9.5M9.6,0.6H13.4V3.5M1,9.5V12.4H3.5" fill="none" stroke="#000" stroke-width="0.7"/><path d="M4.6,8.8L10.2,3.2" stroke="#000" stroke-width="3" stroke-linecap="round"/><path d="M5.6,7.8L9.4,4" stroke="#fff" stroke-width="0.6"/><path d="M3,11L3.6,8.6L5.4,10.3Z" fill="#000"/></svg>
<svg class="a" style="left:48.5px;top:50.2px;overflow:visible" width="41" height="16.8"><text x="0" y="12.1" font-family="Liberation Sans, sans-serif" font-size="10.5" fill="#1a1a1a" textLength="39" lengthAdjust="spacingAndGlyphs" >レイヤー−32</text></svg>
<div class="a" style="left:0px;top:81.2px;width:163px;height:2px;background:#c2c2c2"></div>
<svg class="a" style="left:2px;top:68.1px;" width="13" height="10" viewBox="0 0 13 10"><path d="M0.6,5.8C2.2,1.8 10.8,1.8 12.4,5.8C10.8,9.8 2.2,9.8 0.6,5.8Z" fill="#000"/><ellipse cx="6.5" cy="5.9" rx="2.7" ry="2.2" fill="#fff"/><path d="M2.6,3.6L2.4,0.8M6.5,2.6V0.4M10.4,3.6L10.6,0.8" stroke="#000" stroke-width="1.5"/></svg>
<div class="a" style="left:23.5px;top:68.6px;width:11.6px;height:7.5px;background:#000"></div><div class="t" style="left:27.3px;top:69.2px;font-size:6.5px;color:#fff;">8</div><svg class="a" style="left:23.5px;top:77.6px;" width="12" height="3" viewBox="0 0 12 3"><circle cx="1.4" cy="1.4" r="1.2"/><circle cx="5.3" cy="1.4" r="1.2"/><circle cx="9.2" cy="1.4" r="1.2"/></svg><svg class="a" style="left:35px;top:68.1px;" width="14" height="13" viewBox="0 0 14 13"><path d="M1,3.5V0.6H3.5M11,12.4H13.4V9.5M9.6,0.6H13.4V3.5M1,9.5V12.4H3.5" fill="none" stroke="#000" stroke-width="0.7"/><path d="M4.6,8.8L10.2,3.2" stroke="#000" stroke-width="3" stroke-linecap="round"/><path d="M5.6,7.8L9.4,4" stroke="#fff" stroke-width="0.6"/><path d="M3,11L3.6,8.6L5.4,10.3Z" fill="#000"/></svg>
<svg class="a" style="left:48.5px;top:66.8px;overflow:visible" width="41" height="16.8"><text x="0" y="12.1" font-family="Liberation Sans, sans-serif" font-size="10.5" fill="#1a1a1a" textLength="39" lengthAdjust="spacingAndGlyphs" >レイヤー−31</text></svg>
<div class="a" style="left:0px;top:97.9px;width:163px;height:2px;background:#c2c2c2"></div>
<svg class="a" style="left:2px;top:84.8px;" width="13" height="10" viewBox="0 0 13 10"><path d="M0.6,5.8C2.2,1.8 10.8,1.8 12.4,5.8C10.8,9.8 2.2,9.8 0.6,5.8Z" fill="#000"/><ellipse cx="6.5" cy="5.9" rx="2.7" ry="2.2" fill="#fff"/><path d="M2.6,3.6L2.4,0.8M6.5,2.6V0.4M10.4,3.6L10.6,0.8" stroke="#000" stroke-width="1.5"/></svg>
<div class="a" style="left:23.5px;top:85.3px;width:11.6px;height:7.5px;background:#000"></div><div class="t" style="left:27.3px;top:85.9px;font-size:6.5px;color:#fff;">8</div><svg class="a" style="left:23.5px;top:94.3px;" width="12" height="3" viewBox="0 0 12 3"><circle cx="1.4" cy="1.4" r="1.2"/><circle cx="5.3" cy="1.4" r="1.2"/><circle cx="9.2" cy="1.4" r="1.2"/></svg><svg class="a" style="left:35px;top:84.8px;" width="14" height="13" viewBox="0 0 14 13"><path d="M1,3.5V0.6H3.5M11,12.4H13.4V9.5M9.6,0.6H13.4V3.5M1,9.5V12.4H3.5" fill="none" stroke="#000" stroke-width="0.7"/><path d="M4.6,8.8L10.2,3.2" stroke="#000" stroke-width="3" stroke-linecap="round"/><path d="M5.6,7.8L9.4,4" stroke="#fff" stroke-width="0.6"/><path d="M3,11L3.6,8.6L5.4,10.3Z" fill="#000"/></svg>
<svg class="a" style="left:48.5px;top:83.5px;overflow:visible" width="41" height="16.8"><text x="0" y="12.1" font-family="Liberation Sans, sans-serif" font-size="10.5" fill="#1a1a1a" textLength="39" lengthAdjust="spacingAndGlyphs" >レイヤー−30</text></svg>
<div class="a" style="left:0px;top:114.6px;width:163px;height:2px;background:#c2c2c2"></div>
<svg class="a" style="left:2px;top:101.4px;" width="13" height="10" viewBox="0 0 13 10"><path d="M0.6,5.8C2.2,1.8 10.8,1.8 12.4,5.8C10.8,9.8 2.2,9.8 0.6,5.8Z" fill="#000"/><ellipse cx="6.5" cy="5.9" rx="2.7" ry="2.2" fill="#fff"/><path d="M2.6,3.6L2.4,0.8M6.5,2.6V0.4M10.4,3.6L10.6,0.8" stroke="#000" stroke-width="1.5"/></svg>
<div class="a" style="left:23.5px;top:101.9px;width:11.6px;height:7.5px;background:#000"></div><div class="t" style="left:27.3px;top:102.5px;font-size:6.5px;color:#fff;">8</div><svg class="a" style="left:23.5px;top:110.9px;" width="12" height="3" viewBox="0 0 12 3"><circle cx="1.4" cy="1.4" r="1.2"/><circle cx="5.3" cy="1.4" r="1.2"/><circle cx="9.2" cy="1.4" r="1.2"/></svg><svg class="a" style="left:35px;top:101.4px;" width="14" height="13" viewBox="0 0 14 13"><path d="M1,3.5V0.6H3.5M11,12.4H13.4V9.5M9.6,0.6H13.4V3.5M1,9.5V12.4H3.5" fill="none" stroke="#000" stroke-width="0.7"/><path d="M4.6,8.8L10.2,3.2" stroke="#000" stroke-width="3" stroke-linecap="round"/><path d="M5.6,7.8L9.4,4" stroke="#fff" stroke-width="0.6"/><path d="M3,11L3.6,8.6L5.4,10.3Z" fill="#000"/></svg>
<svg class="a" style="left:48.5px;top:100.2px;overflow:visible" width="41" height="16.8"><text x="0" y="12.1" font-family="Liberation Sans, sans-serif" font-size="10.5" fill="#1a1a1a" textLength="39" lengthAdjust="spacingAndGlyphs" >レイヤー−29</text></svg>
<div class="a" style="left:0px;top:131.2px;width:163px;height:2px;background:#c2c2c2"></div>
<svg class="a" style="left:2px;top:118.1px;" width="13" height="10" viewBox="0 0 13 10"><path d="M0.6,5.8C2.2,1.8 10.8,1.8 12.4,5.8C10.8,9.8 2.2,9.8 0.6,5.8Z" fill="#000"/><ellipse cx="6.5" cy="5.9" rx="2.7" ry="2.2" fill="#fff"/><path d="M2.6,3.6L2.4,0.8M6.5,2.6V0.4M10.4,3.6L10.6,0.8" stroke="#000" stroke-width="1.5"/></svg>
<div class="a" style="left:23.5px;top:118.6px;width:11.6px;height:7.5px;background:#000"></div><div class="t" style="left:27.3px;top:119.2px;font-size:6.5px;color:#fff;">8</div><svg class="a" style="left:23.5px;top:127.6px;" width="12" height="3" viewBox="0 0 12 3"><circle cx="1.4" cy="1.4" r="1.2"/><circle cx="5.3" cy="1.4" r="1.2"/><circle cx="9.2" cy="1.4" r="1.2"/></svg><svg class="a" style="left:35px;top:118.1px;" width="14" height="13" viewBox="0 0 14 13"><path d="M1,3.5V0.6H3.5M11,12.4H13.4V9.5M9.6,0.6H13.4V3.5M1,9.5V12.4H3.5" fill="none" stroke="#000" stroke-width="0.7"/><path d="M4.6,8.8L10.2,3.2" stroke="#000" stroke-width="3" stroke-linecap="round"/><path d="M5.6,7.8L9.4,4" stroke="#fff" stroke-width="0.6"/><path d="M3,11L3.6,8.6L5.4,10.3Z" fill="#000"/></svg>
<svg class="a" style="left:48.5px;top:116.8px;overflow:visible" width="41" height="16.8"><text x="0" y="12.1" font-family="Liberation Sans, sans-serif" font-size="10.5" fill="#1a1a1a" textLength="39" lengthAdjust="spacingAndGlyphs" >レイヤー−28</text></svg>
<div class="a" style="left:0px;top:147.9px;width:163px;height:2px;background:#c2c2c2"></div>
<svg class="a" style="left:2px;top:134.8px;" width="13" height="10" viewBox="0 0 13 10"><path d="M0.6,5.8C2.2,1.8 10.8,1.8 12.4,5.8C10.8,9.8 2.2,9.8 0.6,5.8Z" fill="#000"/><ellipse cx="6.5" cy="5.9" rx="2.7" ry="2.2" fill="#fff"/><path d="M2.6,3.6L2.4,0.8M6.5,2.6V0.4M10.4,3.6L10.6,0.8" stroke="#000" stroke-width="1.5"/></svg>
<div class="a" style="left:23.5px;top:135.3px;width:11.6px;height:7.5px;background:#000"></div><div class="t" style="left:27.3px;top:135.9px;font-size:6.5px;color:#fff;">8</div><svg class="a" style="left:23.5px;top:144.3px;" width="12" height="3" viewBox="0 0 12 3"><circle cx="1.4" cy="1.4" r="1.2"/><circle cx="5.3" cy="1.4" r="1.2"/><circle cx="9.2" cy="1.4" r="1.2"/></svg><svg class="a" style="left:35px;top:134.8px;" width="14" height="13" viewBox="0 0 14 13"><path d="M1,3.5V0.6H3.5M11,12.4H13.4V9.5M9.6,0.6H13.4V3.5M1,9.5V12.4H3.5" fill="none" stroke="#000" stroke-width="0.7"/><path d="M4.6,8.8L10.2,3.2" stroke="#000" stroke-width="3" stroke-linecap="round"/><path d="M5.6,7.8L9.4,4" stroke="#fff" stroke-width="0.6"/><path d="M3,11L3.6,8.6L5.4,10.3Z" fill="#000"/></svg>
<svg class="a" style="left:48.5px;top:133.5px;overflow:visible" width="41" height="16.8"><text x="0" y="12.1" font-family="Liberation Sans, sans-serif" font-size="10.5" fill="#1a1a1a" textLength="39" lengthAdjust="spacingAndGlyphs" >レイヤー−27</text></svg>
<div class="a" style="left:0px;top:164.6px;width:163px;height:2px;background:#c2c2c2"></div>
<svg class="a" style="left:2px;top:151.4px;" width="13" height="10" viewBox="0 0 13 10"><path d="M0.6,5.8C2.2,1.8 10.8,1.8 12.4,5.8C10.8,9.8 2.2,9.8 0.6,5.8Z" fill="#000"/><ellipse cx="6.5" cy="5.9" rx="2.7" ry="2.2" fill="#fff"/><path d="M2.6,3.6L2.4,0.8M6.5,2.6V0.4M10.4,3.6L10.6,0.8" stroke="#000" stroke-width="1.5"/></svg>
<div class="a" style="left:23.5px;top:151.9px;width:11.6px;height:7.5px;background:#000"></div><div class="t" style="left:27.3px;top:152.5px;font-size:6.5px;color:#fff;">8</div><svg class="a" style="left:23.5px;top:160.9px;" width="12" height="3" viewBox="0 0 12 3"><circle cx="1.4" cy="1.4" r="1.2"/><circle cx="5.3" cy="1.4" r="1.2"/><circle cx="9.2" cy="1.4" r="1.2"/></svg><svg class="a" style="left:35px;top:151.4px;" width="14" height="13" viewBox="0 0 14 13"><path d="M1,3.5V0.6H3.5M11,12.4H13.4V9.5M9.6,0.6H13.4V3.5M1,9.5V12.4H3.5" fill="none" stroke="#000" stroke-width="0.7"/><path d="M4.6,8.8L10.2,3.2" stroke="#000" stroke-width="3" stroke-linecap="round"/><path d="M5.6,7.8L9.4,4" stroke="#fff" stroke-width="0.6"/><path d="M3,11L3.6,8.6L5.4,10.3Z" fill="#000"/></svg>
<svg class="a" style="left:48.5px;top:150.2px;overflow:visible" width="41" height="16.8"><text x="0" y="12.1" font-family="Liberation Sans, sans-serif" font-size="10.5" fill="#1a1a1a" textLength="39" lengthAdjust="spacingAndGlyphs" >レイヤー−26</text></svg>
<div class="a" style="left:0px;top:181.2px;width:163px;height:2px;background:#c2c2c2"></div>
<svg class="a" style="left:2px;top:168.1px;" width="13" height="10" viewBox="0 0 13 10"><path d="M0.6,5.8C2.2,1.8 10.8,1.8 12.4,5.8C10.8,9.8 2.2,9.8 0.6,5.8Z" fill="#000"/><ellipse cx="6.5" cy="5.9" rx="2.7" ry="2.2" fill="#fff"/><path d="M2.6,3.6L2.4,0.8M6.5,2.6V0.4M10.4,3.6L10.6,0.8" stroke="#000" stroke-width="1.5"/></svg>
<div class="a" style="left:23.5px;top:168.6px;width:11.6px;height:7.5px;background:#000"></div><div class="t" style="left:27.3px;top:169.2px;font-size:6.5px;color:#fff;">8</div><svg class="a" style="left:23.5px;top:177.6px;" width="12" height="3" viewBox="0 0 12 3"><circle cx="1.4" cy="1.4" r="1.2"/><circle cx="5.3" cy="1.4" r="1.2"/><circle cx="9.2" cy="1.4" r="1.2"/></svg><svg class="a" style="left:35px;top:168.1px;" width="14" height="13" viewBox="0 0 14 13"><path d="M1,3.5V0.6H3.5M11,12.4H13.4V9.5M9.6,0.6H13.4V3.5M1,9.5V12.4H3.5" fill="none" stroke="#000" stroke-width="0.7"/><path d="M4.6,8.8L10.2,3.2" stroke="#000" stroke-width="3" stroke-linecap="round"/><path d="M5.6,7.8L9.4,4" stroke="#fff" stroke-width="0.6"/><path d="M3,11L3.6,8.6L5.4,10.3Z" fill="#000"/></svg>
<svg class="a" style="left:48.5px;top:166.8px;overflow:visible" width="41" height="16.8"><text x="0" y="12.1" font-family="Liberation Sans, sans-serif" font-size="10.5" fill="#1a1a1a" textLength="39" lengthAdjust="spacingAndGlyphs" >レイヤー−25</text></svg>
<div class="a" style="left:0px;top:197.9px;width:163px;height:2px;background:#c2c2c2"></div>
<svg class="a" style="left:2px;top:184.8px;" width="13" height="10" viewBox="0 0 13 10"><path d="M0.6,5.8C2.2,1.8 10.8,1.8 12.4,5.8C10.8,9.8 2.2,9.8 0.6,5.8Z" fill="#000"/><ellipse cx="6.5" cy="5.9" rx="2.7" ry="2.2" fill="#fff"/><path d="M2.6,3.6L2.4,0.8M6.5,2.6V0.4M10.4,3.6L10.6,0.8" stroke="#000" stroke-width="1.5"/></svg>
<div class="a" style="left:23.5px;top:185.3px;width:11.6px;height:7.5px;background:#000"></div><div class="t" style="left:27.3px;top:185.9px;font-size:6.5px;color:#fff;">8</div><svg class="a" style="left:23.5px;top:194.3px;" width="12" height="3" viewBox="0 0 12 3"><circle cx="1.4" cy="1.4" r="1.2"/><circle cx="5.3" cy="1.4" r="1.2"/><circle cx="9.2" cy="1.4" r="1.2"/></svg><svg class="a" style="left:35px;top:184.8px;" width="14" height="13" viewBox="0 0 14 13"><path d="M1,3.5V0.6H3.5M11,12.4H13.4V9.5M9.6,0.6H13.4V3.5M1,9.5V12.4H3.5" fill="none" stroke="#000" stroke-width="0.7"/><path d="M4.6,8.8L10.2,3.2" stroke="#000" stroke-width="3" stroke-linecap="round"/><path d="M5.6,7.8L9.4,4" stroke="#fff" stroke-width="0.6"/><path d="M3,11L3.6,8.6L5.4,10.3Z" fill="#000"/></svg>
<svg class="a" style="left:48.5px;top:183.5px;overflow:visible" width="41" height="16.8"><text x="0" y="12.1" font-family="Liberation Sans, sans-serif" font-size="10.5" fill="#1a1a1a" textLength="39" lengthAdjust="spacingAndGlyphs" >レイヤー−24</text></svg>
<div class="a" style="left:0px;top:214.6px;width:163px;height:2px;background:#c2c2c2"></div>
<svg class="a" style="left:2px;top:201.4px;" width="13" height="10" viewBox="0 0 13 10"><path d="M0.6,5.8C2.2,1.8 10.8,1.8 12.4,5.8C10.8,9.8 2.2,9.8 0.6,5.8Z" fill="#000"/><ellipse cx="6.5" cy="5.9" rx="2.7" ry="2.2" fill="#fff"/><path d="M2.6,3.6L2.4,0.8M6.5,2.6V0.4M10.4,3.6L10.6,0.8" stroke="#000" stroke-width="1.5"/></svg>
<div class="a" style="left:23.5px;top:201.9px;width:11.6px;height:7.5px;background:#000"></div><div class="t" style="left:27.3px;top:202.5px;font-size:6.5px;color:#fff;">8</div><svg class="a" style="left:23.5px;top:210.9px;" width="12" height="3" viewBox="0 0 12 3"><circle cx="1.4" cy="1.4" r="1.2"/><circle cx="5.3" cy="1.4" r="1.2"/><circle cx="9.2" cy="1.4" r="1.2"/></svg><svg class="a" style="left:35px;top:201.4px;" width="14" height="13" viewBox="0 0 14 13"><path d="M1,3.5V0.6H3.5M11,12.4H13.4V9.5M9.6,0.6H13.4V3.5M1,9.5V12.4H3.5" fill="none" stroke="#000" stroke-width="0.7"/><path d="M4.6,8.8L10.2,3.2" stroke="#000" stroke-width="3" stroke-linecap="round"/><path d="M5.6,7.8L9.4,4" stroke="#fff" stroke-width="0.6"/><path d="M3,11L3.6,8.6L5.4,10.3Z" fill="#000"/></svg>
<svg class="a" style="left:48.5px;top:200.2px;overflow:visible" width="41" height="16.8"><text x="0" y="12.1" font-family="Liberation Sans, sans-serif" font-size="10.5" fill="#1a1a1a" textLength="39" lengthAdjust="spacingAndGlyphs" >レイヤー−23</text></svg>
<div class="a" style="left:0px;top:231.2px;width:163px;height:2px;background:#c2c2c2"></div>
<svg class="a" style="left:2px;top:218.1px;" width="13" height="10" viewBox="0 0 13 10"><path d="M0.6,5.8C2.2,1.8 10.8,1.8 12.4,5.8C10.8,9.8 2.2,9.8 0.6,5.8Z" fill="#000"/><ellipse cx="6.5" cy="5.9" rx="2.7" ry="2.2" fill="#fff"/><path d="M2.6,3.6L2.4,0.8M6.5,2.6V0.4M10.4,3.6L10.6,0.8" stroke="#000" stroke-width="1.5"/></svg>
<div class="a" style="left:23.5px;top:218.6px;width:11.6px;height:7.5px;background:#000"></div><div class="t" style="left:27.3px;top:219.2px;font-size:6.5px;color:#fff;">8</div><svg class="a" style="left:23.5px;top:227.6px;" width="12" height="3" viewBox="0 0 12 3"><circle cx="1.4" cy="1.4" r="1.2"/><circle cx="5.3" cy="1.4" r="1.2"/><circle cx="9.2" cy="1.4" r="1.2"/></svg><svg class="a" style="left:35px;top:218.1px;" width="14" height="13" viewBox="0 0 14 13"><path d="M1,3.5V0.6H3.5M11,12.4H13.4V9.5M9.6,0.6H13.4V3.5M1,9.5V12.4H3.5" fill="none" stroke="#000" stroke-width="0.7"/><path d="M4.6,8.8L10.2,3.2" stroke="#000" stroke-width="3" stroke-linecap="round"/><path d="M5.6,7.8L9.4,4" stroke="#fff" stroke-width="0.6"/><path d="M3,11L3.6,8.6L5.4,10.3Z" fill="#000"/></svg>
<svg class="a" style="left:48.5px;top:216.8px;overflow:visible" width="41" height="16.8"><text x="0" y="12.1" font-family="Liberation Sans, sans-serif" font-size="10.5" fill="#1a1a1a" textLength="39" lengthAdjust="spacingAndGlyphs" >レイヤー−22</text></svg>
<div class="a" style="left:0px;top:247.9px;width:163px;height:2px;background:#c2c2c2"></div>
<svg class="a" style="left:2px;top:234.8px;" width="13" height="10" viewBox="0 0 13 10"><path d="M0.6,5.8C2.2,1.8 10.8,1.8 12.4,5.8C10.8,9.8 2.2,9.8 0.6,5.8Z" fill="#000"/><ellipse cx="6.5" cy="5.9" rx="2.7" ry="2.2" fill="#fff"/><path d="M2.6,3.6L2.4,0.8M6.5,2.6V0.4M10.4,3.6L10.6,0.8" stroke="#000" stroke-width="1.5"/></svg>
<div class="a" style="left:23.5px;top:235.3px;width:11.6px;height:7.5px;background:#000"></div><div class="t" style="left:27.3px;top:235.9px;font-size:6.5px;color:#fff;">8</div><svg class="a" style="left:23.5px;top:244.3px;" width="12" height="3" viewBox="0 0 12 3"><circle cx="1.4" cy="1.4" r="1.2"/><circle cx="5.3" cy="1.4" r="1.2"/><circle cx="9.2" cy="1.4" r="1.2"/></svg><svg class="a" style="left:35px;top:234.8px;" width="14" height="13" viewBox="0 0 14 13"><path d="M1,3.5V0.6H3.5M11,12.4H13.4V9.5M9.6,0.6H13.4V3.5M1,9.5V12.4H3.5" fill="none" stroke="#000" stroke-width="0.7"/><path d="M4.6,8.8L10.2,3.2" stroke="#000" stroke-width="3" stroke-linecap="round"/><path d="M5.6,7.8L9.4,4" stroke="#fff" stroke-width="0.6"/><path d="M3,11L3.6,8.6L5.4,10.3Z" fill="#000"/></svg>
<svg class="a" style="left:48.5px;top:233.5px;overflow:visible" width="41" height="16.8"><text x="0" y="12.1" font-family="Liberation Sans, sans-serif" font-size="10.5" fill="#1a1a1a" textLength="39" lengthAdjust="spacingAndGlyphs" >レイヤー−21</text></svg>
<div class="a" style="left:0px;top:264.6px;width:163px;height:2px;background:#c2c2c2"></div>
<svg class="a" style="left:2px;top:251.4px;" width="13" height="10" viewBox="0 0 13 10"><path d="M0.6,5.8C2.2,1.8 10.8,1.8 12.4,5.8C10.8,9.8 2.2,9.8 0.6,5.8Z" fill="#000"/><ellipse cx="6.5" cy="5.9" rx="2.7" ry="2.2" fill="#fff"/><path d="M2.6,3.6L2.4,0.8M6.5,2.6V0.4M10.4,3.6L10.6,0.8" stroke="#000" stroke-width="1.5"/></svg>
<div class="a" style="left:23.5px;top:251.9px;width:11.6px;height:7.5px;background:#000"></div><div class="t" style="left:27.3px;top:252.5px;font-size:6.5px;color:#fff;">8</div><svg class="a" style="left:23.5px;top:260.9px;" width="12" height="3" viewBox="0 0 12 3"><circle cx="1.4" cy="1.4" r="1.2"/><circle cx="5.3" cy="1.4" r="1.2"/><circle cx="9.2" cy="1.4" r="1.2"/></svg><svg class="a" style="left:35px;top:251.4px;" width="14" height="13" viewBox="0 0 14 13"><path d="M1,3.5V0.6H3.5M11,12.4H13.4V9.5M9.6,0.6H13.4V3.5M1,9.5V12.4H3.5" fill="none" stroke="#000" stroke-width="0.7"/><path d="M4.6,8.8L10.2,3.2" stroke="#000" stroke-width="3" stroke-linecap="round"/><path d="M5.6,7.8L9.4,4" stroke="#fff" stroke-width="0.6"/><path d="M3,11L3.6,8.6L5.4,10.3Z" fill="#000"/></svg>
<svg class="a" style="left:48.5px;top:250.2px;overflow:visible" width="41" height="16.8"><text x="0" y="12.1" font-family="Liberation Sans, sans-serif" font-size="10.5" fill="#1a1a1a" textLength="39" lengthAdjust="spacingAndGlyphs" >レイヤー−20</text></svg>
<div class="a" style="left:0px;top:281.2px;width:163px;height:2px;background:#c2c2c2"></div>
<svg class="a" style="left:2px;top:268.1px;" width="13" height="10" viewBox="0 0 13 10"><path d="M0.6,5.8C2.2,1.8 10.8,1.8 12.4,5.8C10.8,9.8 2.2,9.8 0.6,5.8Z" fill="#000"/><ellipse cx="6.5" cy="5.9" rx="2.7" ry="2.2" fill="#fff"/><path d="M2.6,3.6L2.4,0.8M6.5,2.6V0.4M10.4,3.6L10.6,0.8" stroke="#000" stroke-width="1.5"/></svg>
<div class="a" style="left:23.5px;top:268.6px;width:11.6px;height:7.5px;background:#000"></div><div class="t" style="left:27.3px;top:269.2px;font-size:6.5px;color:#fff;">8</div><svg class="a" style="left:23.5px;top:277.6px;" width="12" height="3" viewBox="0 0 12 3"><circle cx="1.4" cy="1.4" r="1.2"/><circle cx="5.3" cy="1.4" r="1.2"/><circle cx="9.2" cy="1.4" r="1.2"/></svg><svg class="a" style="left:35px;top:268.1px;" width="14" height="13" viewBox="0 0 14 13"><path d="M1,3.5V0.6H3.5M11,12.4H13.4V9.5M9.6,0.6H13.4V3.5M1,9.5V12.4H3.5" fill="none" stroke="#000" stroke-width="0.7"/><path d="M4.6,8.8L10.2,3.2" stroke="#000" stroke-width="3" stroke-linecap="round"/><path d="M5.6,7.8L9.4,4" stroke="#fff" stroke-width="0.6"/><path d="M3,11L3.6,8.6L5.4,10.3Z" fill="#000"/></svg>
<svg class="a" style="left:48.5px;top:266.8px;overflow:visible" width="41" height="16.8"><text x="0" y="12.1" font-family="Liberation Sans, sans-serif" font-size="10.5" fill="#1a1a1a" textLength="39" lengthAdjust="spacingAndGlyphs" >レイヤー−19</text></svg>
<div class="a" style="left:0px;top:297.9px;width:163px;height:2px;background:#c2c2c2"></div>
<svg class="a" style="left:2px;top:284.8px;" width="13" height="10" viewBox="0 0 13 10"><path d="M0.6,5.8C2.2,1.8 10.8,1.8 12.4,5.8C10.8,9.8 2.2,9.8 0.6,5.8Z" fill="#000"/><ellipse cx="6.5" cy="5.9" rx="2.7" ry="2.2" fill="#fff"/><path d="M2.6,3.6L2.4,0.8M6.5,2.6V0.4M10.4,3.6L10.6,0.8" stroke="#000" stroke-width="1.5"/></svg>
<div class="a" style="left:23.5px;top:285.3px;width:11.6px;height:7.5px;background:#000"></div><div class="t" style="left:27.3px;top:285.9px;font-size:6.5px;color:#fff;">8</div><svg class="a" style="left:23.5px;top:294.3px;" width="12" height="3" viewBox="0 0 12 3"><circle cx="1.4" cy="1.4" r="1.2"/><circle cx="5.3" cy="1.4" r="1.2"/><circle cx="9.2" cy="1.4" r="1.2"/></svg><svg class="a" style="left:35px;top:284.8px;" width="14" height="13" viewBox="0 0 14 13"><path d="M1,3.5V0.6H3.5M11,12.4H13.4V9.5M9.6,0.6H13.4V3.5M1,9.5V12.4H3.5" fill="none" stroke="#000" stroke-width="0.7"/><path d="M4.6,8.8L10.2,3.2" stroke="#000" stroke-width="3" stroke-linecap="round"/><path d="M5.6,7.8L9.4,4" stroke="#fff" stroke-width="0.6"/><path d="M3,11L3.6,8.6L5.4,10.3Z" fill="#000"/></svg>
<svg class="a" style="left:48.5px;top:283.5px;overflow:visible" width="41" height="16.8"><text x="0" y="12.1" font-family="Liberation Sans, sans-serif" font-size="10.5" fill="#1a1a1a" textLength="39" lengthAdjust="spacingAndGlyphs" >レイヤー−18</text></svg>
<div class="a" style="left:0px;top:314.6px;width:163px;height:2px;background:#c2c2c2"></div>
<svg class="a" style="left:2px;top:301.4px;" width="13" height="10" viewBox="0 0 13 10"><path d="M0.6,5.8C2.2,1.8 10.8,1.8 12.4,5.8C10.8,9.8 2.2,9.8 0.6,5.8Z" fill="#000"/><ellipse cx="6.5" cy="5.9" rx="2.7" ry="2.2" fill="#fff"/><path d="M2.6,3.6L2.4,0.8M6.5,2.6V0.4M10.4,3.6L10.6,0.8" stroke="#000" stroke-width="1.5"/></svg>
<div class="a" style="left:23.5px;top:301.9px;width:11.6px;height:7.5px;background:#000"></div><div class="t" style="left:27.3px;top:302.5px;font-size:6.5px;color:#fff;">8</div><svg class="a" style="left:23.5px;top:310.9px;" width="12" height="3" viewBox="0 0 12 3"><circle cx="1.4" cy="1.4" r="1.2"/><circle cx="5.3" cy="1.4" r="1.2"/><circle cx="9.2" cy="1.4" r="1.2"/></svg><svg class="a" style="left:35px;top:301.4px;" width="14" height="13" viewBox="0 0 14 13"><path d="M1,3.5V0.6H3.5M11,12.4H13.4V9.5M9.6,0.6H13.4V3.5M1,9.5V12.4H3.5" fill="none" stroke="#000" stroke-width="0.7"/><path d="M4.6,8.8L10.2,3.2" stroke="#000" stroke-width="3" stroke-linecap="round"/><path d="M5.6,7.8L9.4,4" stroke="#fff" stroke-width="0.6"/><path d="M3,11L3.6,8.6L5.4,10.3Z" fill="#000"/></svg>
<svg class="a" style="left:48.5px;top:300.2px;overflow:visible" width="41" height="16.8"><text x="0" y="12.1" font-family="Liberation Sans, sans-serif" font-size="10.5" fill="#1a1a1a" textLength="39" lengthAdjust="spacingAndGlyphs" >レイヤー−17</text></svg>
<div class="a" style="left:0px;top:331.2px;width:163px;height:2px;background:#c2c2c2"></div>
<svg class="a" style="left:2px;top:318.1px;" width="13" height="10" viewBox="0 0 13 10"><path d="M0.6,5.8C2.2,1.8 10.8,1.8 12.4,5.8C10.8,9.8 2.2,9.8 0.6,5.8Z" fill="#000"/><ellipse cx="6.5" cy="5.9" rx="2.7" ry="2.2" fill="#fff"/><path d="M2.6,3.6L2.4,0.8M6.5,2.6V0.4M10.4,3.6L10.6,0.8" stroke="#000" stroke-width="1.5"/></svg>
<div class="a" style="left:23.5px;top:318.6px;width:11.6px;height:7.5px;background:#000"></div><div class="t" style="left:27.3px;top:319.2px;font-size:6.5px;color:#fff;">8</div><svg class="a" style="left:23.5px;top:327.6px;" width="12" height="3" viewBox="0 0 12 3"><circle cx="1.4" cy="1.4" r="1.2"/><circle cx="5.3" cy="1.4" r="1.2"/><circle cx="9.2" cy="1.4" r="1.2"/></svg><svg class="a" style="left:35px;top:318.1px;" width="14" height="13" viewBox="0 0 14 13"><path d="M1,3.5V0.6H3.5M11,12.4H13.4V9.5M9.6,0.6H13.4V3.5M1,9.5V12.4H3.5" fill="none" stroke="#000" stroke-width="0.7"/><path d="M4.6,8.8L10.2,3.2" stroke="#000" stroke-width="3" stroke-linecap="round"/><path d="M5.6,7.8L9.4,4" stroke="#fff" stroke-width="0.6"/><path d="M3,11L3.6,8.6L5.4,10.3Z" fill="#000"/></svg>
<svg class="a" style="left:48.5px;top:316.8px;overflow:visible" width="41" height="16.8"><text x="0" y="12.1" font-family="Liberation Sans, sans-serif" font-size="10.5" fill="#1a1a1a" textLength="39" lengthAdjust="spacingAndGlyphs" >レイヤー−16</text></svg>
<div class="a" style="left:0px;top:347.9px;width:163px;height:2px;background:#c2c2c2"></div>
<svg class="a" style="left:2px;top:334.8px;" width="13" height="10" viewBox="0 0 13 10"><path d="M0.6,5.8C2.2,1.8 10.8,1.8 12.4,5.8C10.8,9.8 2.2,9.8 0.6,5.8Z" fill="#000"/><ellipse cx="6.5" cy="5.9" rx="2.7" ry="2.2" fill="#fff"/><path d="M2.6,3.6L2.4,0.8M6.5,2.6V0.4M10.4,3.6L10.6,0.8" stroke="#000" stroke-width="1.5"/></svg>
<div class="a" style="left:23.5px;top:335.3px;width:11.6px;height:7.5px;background:#000"></div><div class="t" style="left:27.3px;top:335.9px;font-size:6.5px;color:#fff;">8</div><svg class="a" style="left:23.5px;top:344.3px;" width="12" height="3" viewBox="0 0 12 3"><circle cx="1.4" cy="1.4" r="1.2"/><circle cx="5.3" cy="1.4" r="1.2"/><circle cx="9.2" cy="1.4" r="1.2"/></svg><svg class="a" style="left:35px;top:334.8px;" width="14" height="13" viewBox="0 0 14 13"><path d="M1,3.5V0.6H3.5M11,12.4H13.4V9.5M9.6,0.6H13.4V3.5M1,9.5V12.4H3.5" fill="none" stroke="#000" stroke-width="0.7"/><path d="M4.6,8.8L10.2,3.2" stroke="#000" stroke-width="3" stroke-linecap="round"/><path d="M5.6,7.8L9.4,4" stroke="#fff" stroke-width="0.6"/><path d="M3,11L3.6,8.6L5.4,10.3Z" fill="#000"/></svg>
<svg class="a" style="left:48.5px;top:333.5px;overflow:visible" width="41" height="16.8"><text x="0" y="12.1" font-family="Liberation Sans, sans-serif" font-size="10.5" fill="#1a1a1a" textLength="39" lengthAdjust="spacingAndGlyphs" >レイヤー−15</text></svg>
<div class="a" style="left:0px;top:364.6px;width:163px;height:2px;background:#c2c2c2"></div>
<svg class="a" style="left:2px;top:351.4px;" width="13" height="10" viewBox="0 0 13 10"><path d="M0.6,5.8C2.2,1.8 10.8,1.8 12.4,5.8C10.8,9.8 2.2,9.8 0.6,5.8Z" fill="#000"/><ellipse cx="6.5" cy="5.9" rx="2.7" ry="2.2" fill="#fff"/><path d="M2.6,3.6L2.4,0.8M6.5,2.6V0.4M10.4,3.6L10.6,0.8" stroke="#000" stroke-width="1.5"/></svg>
<div class="a" style="left:23.5px;top:351.9px;width:11.6px;height:7.5px;background:#000"></div><div class="t" style="left:27.3px;top:352.5px;font-size:6.5px;color:#fff;">8</div><svg class="a" style="left:23.5px;top:360.9px;" width="12" height="3" viewBox="0 0 12 3"><circle cx="1.4" cy="1.4" r="1.2"/><circle cx="5.3" cy="1.4" r="1.2"/><circle cx="9.2" cy="1.4" r="1.2"/></svg><svg class="a" style="left:35px;top:351.4px;" width="14" height="13" viewBox="0 0 14 13"><path d="M1,3.5V0.6H3.5M11,12.4H13.4V9.5M9.6,0.6H13.4V3.5M1,9.5V12.4H3.5" fill="none" stroke="#000" stroke-width="0.7"/><path d="M4.6,8.8L10.2,3.2" stroke="#000" stroke-width="3" stroke-linecap="round"/><path d="M5.6,7.8L9.4,4" stroke="#fff" stroke-width="0.6"/><path d="M3,11L3.6,8.6L5.4,10.3Z" fill="#000"/></svg>
<svg class="a" style="left:48.5px;top:350.2px;overflow:visible" width="41" height="16.8"><text x="0" y="12.1" font-family="Liberation Sans, sans-serif" font-size="10.5" fill="#1a1a1a" textLength="39" lengthAdjust="spacingAndGlyphs" >レイヤー−14</text></svg>
<div class="a" style="left:0px;top:381.2px;width:163px;height:2px;background:#c2c2c2"></div>
<svg class="a" style="left:2px;top:368.1px;" width="13" height="10" viewBox="0 0 13 10"><path d="M0.6,5.8C2.2,1.8 10.8,1.8 12.4,5.8C10.8,9.8 2.2,9.8 0.6,5.8Z" fill="#000"/><ellipse cx="6.5" cy="5.9" rx="2.7" ry="2.2" fill="#fff"/><path d="M2.6,3.6L2.4,0.8M6.5,2.6V0.4M10.4,3.6L10.6,0.8" stroke="#000" stroke-width="1.5"/></svg>
<div class="a" style="left:23.5px;top:368.6px;width:11.6px;height:7.5px;background:#000"></div><div class="t" style="left:27.3px;top:369.2px;font-size:6.5px;color:#fff;">8</div><svg class="a" style="left:23.5px;top:377.6px;" width="12" height="3" viewBox="0 0 12 3"><circle cx="1.4" cy="1.4" r="1.2"/><circle cx="5.3" cy="1.4" r="1.2"/><circle cx="9.2" cy="1.4" r="1.2"/></svg><svg class="a" style="left:35px;top:368.1px;" width="14" height="13" viewBox="0 0 14 13"><path d="M1,3.5V0.6H3.5M11,12.4H13.4V9.5M9.6,0.6H13.4V3.5M1,9.5V12.4H3.5" fill="none" stroke="#000" stroke-width="0.7"/><path d="M4.6,8.8L10.2,3.2" stroke="#000" stroke-width="3" stroke-linecap="round"/><path d="M5.6,7.8L9.4,4" stroke="#fff" stroke-width="0.6"/><path d="M3,11L3.6,8.6L5.4,10.3Z" fill="#000"/></svg>
<svg class="a" style="left:48.5px;top:366.8px;overflow:visible" width="41" height="16.8"><text x="0" y="12.1" font-family="Liberation Sans, sans-serif" font-size="10.5" fill="#1a1a1a" textLength="39" lengthAdjust="spacingAndGlyphs" >レイヤー−13</text></svg>
<div class="a" style="left:0px;top:397.9px;width:163px;height:2px;background:#c2c2c2"></div>
<svg class="a" style="left:2px;top:384.8px;" width="13" height="10" viewBox="0 0 13 10"><path d="M0.6,5.8C2.2,1.8 10.8,1.8 12.4,5.8C10.8,9.8 2.2,9.8 0.6,5.8Z" fill="#000"/><ellipse cx="6.5" cy="5.9" rx="2.7" ry="2.2" fill="#fff"/><path d="M2.6,3.6L2.4,0.8M6.5,2.6V0.4M10.4,3.6L10.6,0.8" stroke="#000" stroke-width="1.5"/></svg>
<div class="a" style="left:23.5px;top:385.3px;width:11.6px;height:7.5px;background:#000"></div><div class="t" style="left:27.3px;top:385.9px;font-size:6.5px;color:#fff;">8</div><svg class="a" style="left:23.5px;top:394.3px;" width="12" height="3" viewBox="0 0 12 3"><circle cx="1.4" cy="1.4" r="1.2"/><circle cx="5.3" cy="1.4" r="1.2"/><circle cx="9.2" cy="1.4" r="1.2"/></svg><svg class="a" style="left:35px;top:384.8px;" width="14" height="13" viewBox="0 0 14 13"><path d="M1,3.5V0.6H3.5M11,12.4H13.4V9.5M9.6,0.6H13.4V3.5M1,9.5V12.4H3.5" fill="none" stroke="#000" stroke-width="0.7"/><path d="M4.6,8.8L10.2,3.2" stroke="#000" stroke-width="3" stroke-linecap="round"/><path d="M5.6,7.8L9.4,4" stroke="#fff" stroke-width="0.6"/><path d="M3,11L3.6,8.6L5.4,10.3Z" fill="#000"/></svg>
<svg class="a" style="left:48.5px;top:383.5px;overflow:visible" width="41" height="16.8"><text x="0" y="12.1" font-family="Liberation Sans, sans-serif" font-size="10.5" fill="#1a1a1a" textLength="39" lengthAdjust="spacingAndGlyphs" >レイヤー−12</text></svg>
<div class="a" style="left:0px;top:414.6px;width:163px;height:2px;background:#c2c2c2"></div>
<svg class="a" style="left:2px;top:401.4px;" width="13" height="10" viewBox="0 0 13 10"><path d="M0.6,5.8C2.2,1.8 10.8,1.8 12.4,5.8C10.8,9.8 2.2,9.8 0.6,5.8Z" fill="#000"/><ellipse cx="6.5" cy="5.9" rx="2.7" ry="2.2" fill="#fff"/><path d="M2.6,3.6L2.4,0.8M6.5,2.6V0.4M10.4,3.6L10.6,0.8" stroke="#000" stroke-width="1.5"/></svg>
<div class="a" style="left:23.5px;top:401.9px;width:11.6px;height:7.5px;background:#000"></div><div class="t" style="left:27.3px;top:402.5px;font-size:6.5px;color:#fff;">8</div><svg class="a" style="left:23.5px;top:410.9px;" width="12" height="3" viewBox="0 0 12 3"><circle cx="1.4" cy="1.4" r="1.2"/><circle cx="5.3" cy="1.4" r="1.2"/><circle cx="9.2" cy="1.4" r="1.2"/></svg><svg class="a" style="left:35px;top:401.4px;" width="14" height="13" viewBox="0 0 14 13"><path d="M1,3.5V0.6H3.5M11,12.4H13.4V9.5M9.6,0.6H13.4V3.5M1,9.5V12.4H3.5" fill="none" stroke="#000" stroke-width="0.7"/><path d="M4.6,8.8L10.2,3.2" stroke="#000" stroke-width="3" stroke-linecap="round"/><path d="M5.6,7.8L9.4,4" stroke="#fff" stroke-width="0.6"/><path d="M3,11L3.6,8.6L5.4,10.3Z" fill="#000"/></svg>
<svg class="a" style="left:48.5px;top:400.2px;overflow:visible" width="41" height="16.8"><text x="0" y="12.1" font-family="Liberation Sans, sans-serif" font-size="10.5" fill="#1a1a1a" textLength="39" lengthAdjust="spacingAndGlyphs" >レイヤー−11</text></svg>
<div class="a" style="left:0px;top:431.2px;width:163px;height:2px;background:#c2c2c2"></div>
<svg class="a" style="left:2px;top:418.1px;" width="13" height="10" viewBox="0 0 13 10"><path d="M0.6,5.8C2.2,1.8 10.8,1.8 12.4,5.8C10.8,9.8 2.2,9.8 0.6,5.8Z" fill="#000"/><ellipse cx="6.5" cy="5.9" rx="2.7" ry="2.2" fill="#fff"/><path d="M2.6,3.6L2.4,0.8M6.5,2.6V0.4M10.4,3.6L10.6,0.8" stroke="#000" stroke-width="1.5"/></svg>
<div class="a" style="left:23.5px;top:418.6px;width:11.6px;height:7.5px;background:#000"></div><div class="t" style="left:27.3px;top:419.2px;font-size:6.5px;color:#fff;">8</div><svg class="a" style="left:23.5px;top:427.6px;" width="12" height="3" viewBox="0 0 12 3"><circle cx="1.4" cy="1.4" r="1.2"/><circle cx="5.3" cy="1.4" r="1.2"/><circle cx="9.2" cy="1.4" r="1.2"/></svg><svg class="a" style="left:35px;top:418.1px;" width="14" height="13" viewBox="0 0 14 13"><path d="M1,3.5V0.6H3.5M11,12.4H13.4V9.5M9.6,0.6H13.4V3.5M1,9.5V12.4H3.5" fill="none" stroke="#000" stroke-width="0.7"/><path d="M4.6,8.8L10.2,3.2" stroke="#000" stroke-width="3" stroke-linecap="round"/><path d="M5.6,7.8L9.4,4" stroke="#fff" stroke-width="0.6"/><path d="M3,11L3.6,8.6L5.4,10.3Z" fill="#000"/></svg>
<svg class="a" style="left:48.5px;top:416.8px;overflow:visible" width="41" height="16.8"><text x="0" y="12.1" font-family="Liberation Sans, sans-serif" font-size="10.5" fill="#1a1a1a" textLength="39" lengthAdjust="spacingAndGlyphs" >レイヤー−10</text></svg>
<div class="a" style="left:0px;top:447.9px;width:163px;height:2px;background:#c2c2c2"></div>
<svg class="a" style="left:2px;top:434.8px;" width="13" height="10" viewBox="0 0 13 10"><path d="M0.6,5.8C2.2,1.8 10.8,1.8 12.4,5.8C10.8,9.8 2.2,9.8 0.6,5.8Z" fill="#000"/><ellipse cx="6.5" cy="5.9" rx="2.7" ry="2.2" fill="#fff"/><path d="M2.6,3.6L2.4,0.8M6.5,2.6V0.4M10.4,3.6L10.6,0.8" stroke="#000" stroke-width="1.5"/></svg>
<div class="a" style="left:23.5px;top:435.3px;width:11.6px;height:7.5px;background:#000"></div><div class="t" style="left:27.3px;top:435.9px;font-size:6.5px;color:#fff;">8</div><svg class="a" style="left:23.5px;top:444.3px;" width="12" height="3" viewBox="0 0 12 3"><circle cx="1.4" cy="1.4" r="1.2"/><circle cx="5.3" cy="1.4" r="1.2"/><circle cx="9.2" cy="1.4" r="1.2"/></svg><svg class="a" style="left:35px;top:434.8px;" width="14" height="13" viewBox="0 0 14 13"><path d="M1,3.5V0.6H3.5M11,12.4H13.4V9.5M9.6,0.6H13.4V3.5M1,9.5V12.4H3.5" fill="none" stroke="#000" stroke-width="0.7"/><path d="M4.6,8.8L10.2,3.2" stroke="#000" stroke-width="3" stroke-linecap="round"/><path d="M5.6,7.8L9.4,4" stroke="#fff" stroke-width="0.6"/><path d="M3,11L3.6,8.6L5.4,10.3Z" fill="#000"/></svg>
<svg class="a" style="left:48.5px;top:433.5px;overflow:visible" width="34" height="16.8"><text x="0" y="12.1" font-family="Liberation Sans, sans-serif" font-size="10.5" fill="#1a1a1a" textLength="32" lengthAdjust="spacingAndGlyphs" >レイヤー−9</text></svg>
<div class="a" style="left:0px;top:464.6px;width:163px;height:2px;background:#c2c2c2"></div>
<svg class="a" style="left:2px;top:451.4px;" width="13" height="10" viewBox="0 0 13 10"><path d="M0.6,5.8C2.2,1.8 10.8,1.8 12.4,5.8C10.8,9.8 2.2,9.8 0.6,5.8Z" fill="#000"/><ellipse cx="6.5" cy="5.9" rx="2.7" ry="2.2" fill="#fff"/><path d="M2.6,3.6L2.4,0.8M6.5,2.6V0.4M10.4,3.6L10.6,0.8" stroke="#000" stroke-width="1.5"/></svg>
<div class="a" style="left:23.5px;top:451.9px;width:11.6px;height:7.5px;background:#000"></div><div class="t" style="left:27.3px;top:452.5px;font-size:6.5px;color:#fff;">8</div><svg class="a" style="left:23.5px;top:460.9px;" width="12" height="3" viewBox="0 0 12 3"><circle cx="1.4" cy="1.4" r="1.2"/><circle cx="5.3" cy="1.4" r="1.2"/><circle cx="9.2" cy="1.4" r="1.2"/></svg><svg class="a" style="left:35px;top:451.4px;" width="14" height="13" viewBox="0 0 14 13"><path d="M1,3.5V0.6H3.5M11,12.4H13.4V9.5M9.6,0.6H13.4V3.5M1,9.5V12.4H3.5" fill="none" stroke="#000" stroke-width="0.7"/><path d="M4.6,8.8L10.2,3.2" stroke="#000" stroke-width="3" stroke-linecap="round"/><path d="M5.6,7.8L9.4,4" stroke="#fff" stroke-width="0.6"/><path d="M3,11L3.6,8.6L5.4,10.3Z" fill="#000"/></svg>
<svg class="a" style="left:48.5px;top:450.2px;overflow:visible" width="34" height="16.8"><text x="0" y="12.1" font-family="Liberation Sans, sans-serif" font-size="10.5" fill="#1a1a1a" textLength="32" lengthAdjust="spacingAndGlyphs" >レイヤー−8</text></svg>
<div class="a" style="left:0px;top:481.2px;width:163px;height:2px;background:#c2c2c2"></div>
<svg class="a" style="left:2px;top:468.1px;" width="13" height="10" viewBox="0 0 13 10"><path d="M0.6,5.8C2.2,1.8 10.8,1.8 12.4,5.8C10.8,9.8 2.2,9.8 0.6,5.8Z" fill="#000"/><ellipse cx="6.5" cy="5.9" rx="2.7" ry="2.2" fill="#fff"/><path d="M2.6,3.6L2.4,0.8M6.5,2.6V0.4M10.4,3.6L10.6,0.8" stroke="#000" stroke-width="1.5"/></svg>
<div class="a" style="left:23.5px;top:468.6px;width:11.6px;height:7.5px;background:#000"></div><div class="t" style="left:27.3px;top:469.2px;font-size:6.5px;color:#fff;">8</div><svg class="a" style="left:23.5px;top:477.6px;" width="12" height="3" viewBox="0 0 12 3"><circle cx="1.4" cy="1.4" r="1.2"/><circle cx="5.3" cy="1.4" r="1.2"/><circle cx="9.2" cy="1.4" r="1.2"/></svg><svg class="a" style="left:35px;top:468.1px;" width="14" height="13" viewBox="0 0 14 13"><path d="M1,3.5V0.6H3.5M11,12.4H13.4V9.5M9.6,0.6H13.4V3.5M1,9.5V12.4H3.5" fill="none" stroke="#000" stroke-width="0.7"/><path d="M4.6,8.8L10.2,3.2" stroke="#000" stroke-width="3" stroke-linecap="round"/><path d="M5.6,7.8L9.4,4" stroke="#fff" stroke-width="0.6"/><path d="M3,11L3.6,8.6L5.4,10.3Z" fill="#000"/></svg>
<svg class="a" style="left:48.5px;top:466.8px;overflow:visible" width="34" height="16.8"><text x="0" y="12.1" font-family="Liberation Sans, sans-serif" font-size="10.5" fill="#1a1a1a" textLength="32" lengthAdjust="spacingAndGlyphs" >レイヤー−7</text></svg>
</div>
<div class="a" style="left:1150px;top:321px;width:6px;height:362px;background:#858585;border-radius:3px"></div>
<svg class="a" style="left:991px;top:800px;" width="10" height="10" viewBox="0 0 10 10"><path d="M1,5H9M5,1V9" stroke="#333" stroke-width="1.5"/></svg>
<svg class="a" style="left:1009px;top:800px;" width="10" height="10" viewBox="0 0 10 10"><path d="M1,5H9" stroke="#333" stroke-width="1.5"/></svg>
<svg class="a" style="left:1027px;top:801px;" width="12" height="8" viewBox="0 0 12 8"><path d="M1,6C2,2 10,2 11,6" fill="none" stroke="#333" stroke-width="2.4"/></svg>
<svg class="a" style="left:1046px;top:799px;" width="10" height="11" viewBox="0 0 10 11"><path d="M2.5,5V3.5A2.5,2.5 0 0 1 7.5,3.5V5" fill="none" stroke="#333" stroke-width="1.4"/><rect x="1" y="5" width="8" height="6" fill="#333"/></svg>
<svg class="a" style="left:1065px;top:799px;" width="8" height="12" viewBox="0 0 8 12"><path d="M4,1A2,2 0 0 0 4,5A2,2 0 0 0 4,9M4,3A2,2 0 0 1 4,7A2,2 0 0 1 4,11" fill="none" stroke="#333" stroke-width="1.1"/></svg>
<svg class="a" style="left:1083px;top:802px;" width="9" height="6" viewBox="0 0 9 6"><path d="M0,0H9L4.5,5Z" fill="#333"/></svg>
<div class="a" style="left:979px;top:265px;width:186px;height:549px;border:4px solid #ff2200"></div>
<div class="a" style="left:1167px;top:75px;width:64px;height:20px;background:#fff"></div>
<svg class="a" style="left:1177px;top:77.9px;overflow:visible" width="46" height="16.8"><text x="0" y="12.1" font-family="Liberation Sans, sans-serif" font-size="10.5" fill="#1a1a1a" textLength="44" lengthAdjust="spacingAndGlyphs" >色相・彩度</text></svg>
<div class="a" style="left:1231px;top:75px;width:56px;height:20px;background:#e2e2e2"></div>
<svg class="a" style="left:1242px;top:77.9px;overflow:visible" width="37" height="16.8"><text x="0" y="12.1" font-family="Liberation Sans, sans-serif" font-size="10.5" fill="#1a1a1a" textLength="35" lengthAdjust="spacingAndGlyphs" >スウォッチ</text></svg>
<div class="a" style="left:1287px;top:75px;width:50px;height:20px;background:#e2e2e2"></div>
<svg class="a" style="left:1298px;top:77.9px;overflow:visible" width="31" height="16.8"><text x="0" y="12.1" font-family="Liberation Sans, sans-serif" font-size="10.5" fill="#1a1a1a" textLength="29" lengthAdjust="spacingAndGlyphs" >近似色</text></svg>
<div class="a" style="left:1167px;top:95px;width:278px;height:1px;background:#d6d6d6"></div>
<div class="a" style="left:1167px;top:94px;width:64px;height:2px;background:#9ec0e4"></div>
<div class="a" style="left:1169px;top:123px;width:121px;height:121px;border-radius:50%;background:radial-gradient(circle closest-side,#fff 0%,rgba(255,255,255,0.55) 30%,rgba(255,255,255,0) 90%),conic-gradient(from 90deg,#f00,#f0f,#00f,#0ff,#0f0,#ff0,#f00)"></div>
<div class="a" style="left:1214.5px;top:177.5px;width:7px;height:7px;border-radius:50%;border:1.3px solid #333;background:#a8d5c8"></div>
<div class="a" style="left:1221px;top:249px;width:17px;height:9px;background:#3a3a3a;border-radius:2px"></div>
<div class="t" style="left:1222.5px;top:250px;font-size:7.5px;color:#fff;">162</div>
<div class="a" style="left:1304px;top:127px;width:117px;height:117px;background:linear-gradient(to top,#333 0%,rgba(51,51,51,0) 100%),linear-gradient(to right,#fff,#3ff5c5)"></div>
<div class="a" style="left:1329px;top:144px;width:7px;height:7px;border:1.3px solid #222;background:transparent"></div>
<div class="a" style="left:1428px;top:143px;width:16px;height:9px;background:#3a3a3a;border-radius:2px"></div>
<svg class="a" style="left:1422px;top:144px;" width="6" height="7" viewBox="0 0 6 7"><path d="M6,0L0,3.5L6,7Z" fill="#3a3a3a"/></svg>
<div class="t" style="left:1431px;top:144px;font-size:7.5px;color:#fff;">85</div>
<div class="a" style="left:1324px;top:250px;width:17px;height:9px;background:#3a3a3a;border-radius:2px"></div>
<svg class="a" style="left:1329px;top:245px;" width="7" height="6" viewBox="0 0 7 6"><path d="M0,6L3.5,0L7,6Z" fill="#3a3a3a"/></svg>
<div class="t" style="left:1327px;top:251px;font-size:7.5px;color:#fff;">22</div>
<div class="a" style="left:1167px;top:287px;width:278px;height:2px;background:#d8d8d8"></div>
<div class="a" style="left:1167px;top:292px;width:41px;height:20px;background:#fff"></div>
<svg class="a" style="left:1177px;top:294.9px;overflow:visible" width="22" height="16.8"><text x="0" y="12.1" font-family="Liberation Sans, sans-serif" font-size="10.5" fill="#1a1a1a" textLength="20" lengthAdjust="spacingAndGlyphs" >カラー</text></svg>
<div class="a" style="left:1167px;top:312px;width:278px;height:1px;background:#d6d6d6"></div>
<div class="a" style="left:1167px;top:311px;width:41px;height:2px;background:#9ec0e4"></div>
<div class="a" style="left:1168px;top:317px;width:63px;height:10px;border:1px solid #bbb;background:#f4f4f4"></div>
<div class="a" style="left:1209px;top:317px;width:22px;height:10px;background:#3c3c3c"></div>
<div class="t" style="left:1170px;top:318.5px;font-size:8px;color:#444;letter-spacing:0.3px">RGB</div>
<div class="t" style="left:1189.5px;top:318.5px;font-size:8px;color:#444;letter-spacing:0.3px">HSB</div>
<div class="t" style="left:1210px;top:318.5px;font-size:8px;color:#fff;letter-spacing:0.3px">CMY</div>
<div class="a" style="left:1191px;top:349px;width:34px;height:34px;background:#f7f5f0;border:1px solid #c8c8c8;border-radius:4px"></div>
<div class="a" style="left:1173px;top:330px;width:35px;height:35px;background:#a8d5c8;border:2.5px solid #1a1a1a;border-radius:5px"></div>
<div class="a" style="left:1176px;top:368px;width:12px;height:12px;background:#a8d5c8;border:1px solid #333"></div>
<svg class="a" style="left:1210px;top:332px;" width="13" height="14" viewBox="0 0 13 14"><path d="M2,4C5,1 9,2 10,6" fill="none" stroke="#111" stroke-width="1.6"/><path d="M7,6L11,9L12,4Z" fill="#111"/><path d="M0,3L4,0L4,6Z" fill="#111"/></svg>
<div class="t" style="left:1236px;top:323.5px;font-size:11px;color:#333;">C</div>
<div class="a" style="left:1252px;top:322px;width:134px;height:4px;background:linear-gradient(to right,#f7cfc0,#00d4c8)"></div>
<svg class="a" style="left:1291.5px;top:327px;" width="12" height="8" viewBox="0 0 12 8"><path d="M6,0L12,8H0Z" fill="#111"/></svg>
<div class="t" style="left:1236px;top:345.5px;font-size:11px;color:#333;">M</div>
<div class="a" style="left:1252px;top:344px;width:134px;height:4px;background:linear-gradient(to right,#a4f2c2,#a000c8)"></div>
<svg class="a" style="left:1266.5px;top:349px;" width="12" height="8" viewBox="0 0 12 8"><path d="M6,0L12,8H0Z" fill="#111"/></svg>
<div class="t" style="left:1236px;top:367px;font-size:11px;color:#333;">Y</div>
<div class="a" style="left:1252px;top:365.5px;width:134px;height:4px;background:linear-gradient(to right,#a8d0f4,#a8d400)"></div>
<svg class="a" style="left:1274px;top:370.5px;" width="12" height="8" viewBox="0 0 12 8"><path d="M6,0L12,8H0Z" fill="#111"/></svg>
<div class="a" style="left:1395px;top:320px;width:48px;height:17px;background:#fff;border:1px solid #d3d3d3;border-radius:3px"></div><div class="a" style="left:1427px;top:321px;width:1px;height:15px;background:#dedede"></div><div class="a" style="left:1428px;top:321px;width:14px;height:15px;background:#f9f9f9"></div><svg class="a" style="left:1430px;top:322.5px;" width="10" height="12" viewBox="0 0 10 12"><path d="M1.5,5L5,1.5L8.5,5M1.5,7L5,10.5L8.5,7" fill="none" stroke="#666" stroke-width="1"/></svg><div class="t" style="left:1423px;top:323px;font-size:11px;color:#222;transform:translateX(-100%)">87</div>
<div class="a" style="left:1395px;top:342px;width:48px;height:17px;background:#fff;border:1px solid #d3d3d3;border-radius:3px"></div><div class="a" style="left:1427px;top:343px;width:1px;height:15px;background:#dedede"></div><div class="a" style="left:1428px;top:343px;width:14px;height:15px;background:#f9f9f9"></div><svg class="a" style="left:1430px;top:344.5px;" width="10" height="12" viewBox="0 0 10 12"><path d="M1.5,5L5,1.5L8.5,5M1.5,7L5,10.5L8.5,7" fill="none" stroke="#666" stroke-width="1"/></svg><div class="t" style="left:1423px;top:345px;font-size:11px;color:#222;transform:translateX(-100%)">39</div>
<div class="a" style="left:1395px;top:363px;width:48px;height:17px;background:#fff;border:1px solid #d3d3d3;border-radius:3px"></div><div class="a" style="left:1427px;top:364px;width:1px;height:15px;background:#dedede"></div><div class="a" style="left:1428px;top:364px;width:14px;height:15px;background:#f9f9f9"></div><svg class="a" style="left:1430px;top:365.5px;" width="10" height="12" viewBox="0 0 10 12"><path d="M1.5,5L5,1.5L8.5,5M1.5,7L5,10.5L8.5,7" fill="none" stroke="#666" stroke-width="1"/></svg><div class="t" style="left:1423px;top:366px;font-size:11px;color:#222;transform:translateX(-100%)">53</div>
<div class="a" style="left:1168px;top:388px;width:15px;height:15px;background:#404040"></div>
<div class="t" style="left:1172px;top:392px;font-size:9px;color:#eee;">6</div>
<div class="a" style="left:1188px;top:388px;width:248px;height:15px;background:linear-gradient(to bottom,rgba(255,255,255,0.75),rgba(255,255,255,0) 45%,rgba(0,0,0,0) 55%,rgba(0,0,0,1)),linear-gradient(to right,#f00,#ff0 17%,#0f0 33%,#0ff 50%,#00f 67%,#f0f 83%,#f00)"></div>
<div class="a" style="left:1436px;top:388px;width:9px;height:8px;background:#fff"></div>
<div class="a" style="left:1436px;top:396px;width:9px;height:7px;background:#000"></div>
<div class="a" style="left:1168px;top:408px;width:277px;height:53px;background:#333"></div>
<div class="a" style="left:1169.5px;top:409.5px;width:33.5px;height:34px;background:#f7f5f0;border-radius:5px;"></div>
<div class="t" style="left:1172.5px;top:413px;font-size:9.5px;color:#2a2a2a;">1</div>
<div class="a" style="left:1206.1px;top:409.5px;width:33.5px;height:34px;background:#a8d5c8;border-radius:5px;box-shadow:0 0 0 1.5px #eee inset, 0 0 0 0.5px #eee"></div>
<div class="t" style="left:1209.1px;top:413px;font-size:9.5px;color:#2a2a2a;">2</div>
<div class="a" style="left:1242.7px;top:409.5px;width:33.5px;height:34px;background:#68ad98;border-radius:5px;"></div>
<div class="t" style="left:1245.7px;top:413px;font-size:9.5px;color:#2a2a2a;">3</div>
<div class="a" style="left:1279.3px;top:409.5px;width:33.5px;height:34px;background:#84c0ad;border-radius:5px;"></div>
<div class="t" style="left:1282.3px;top:413px;font-size:9.5px;color:#2a2a2a;">4</div>
<div class="a" style="left:1315.9px;top:409.5px;width:33.5px;height:34px;background:#55997f;border-radius:5px;"></div>
<div class="t" style="left:1318.9px;top:413px;font-size:9.5px;color:#2a2a2a;">5</div>
<div class="a" style="left:1352.5px;top:409.5px;width:33.5px;height:34px;background:#f26e55;border-radius:5px;"></div>
<div class="t" style="left:1355.5px;top:413px;font-size:9.5px;color:#2a2a2a;">6</div>
<svg class="a" style="left:1172px;top:466px;" width="10" height="10" viewBox="0 0 10 10"><path d="M1,5H9M5,1V9" stroke="#333" stroke-width="1.5"/></svg>
<svg class="a" style="left:1190px;top:466px;" width="10" height="10" viewBox="0 0 10 10"><path d="M1,5H9" stroke="#333" stroke-width="1.5"/></svg>
<svg class="a" style="left:1208px;top:466px;" width="10" height="10" viewBox="0 0 10 10"><path d="M1,5L4,8.5L9,1" fill="none" stroke="#555" stroke-width="1.2"/></svg>
<svg class="a" style="left:1227px;top:466px;" width="10" height="10" viewBox="0 0 10 10"><path d="M1,9L2,6L7,1L9,3L4,8Z" fill="#333"/></svg>
<svg class="a" style="left:1245px;top:467px;" width="10" height="8" viewBox="0 0 10 8"><path d="M0,4L3,1V7ZM10,4L7,1V7Z" fill="#333"/><path d="M3,4H7" stroke="#333" stroke-width="1.2"/></svg>
<svg class="a" style="left:1263px;top:466px;" width="10" height="10" viewBox="0 0 10 10"><circle cx="5" cy="5" r="3.8" fill="none" stroke="#333" stroke-width="1.5"/><path d="M2.5,2.5L7.5,7.5" stroke="#333" stroke-width="1.5"/></svg>
<svg class="a" style="left:1285px;top:463.9px;overflow:visible" width="23" height="16.8"><text x="0" y="12.1" font-family="Liberation Sans, sans-serif" font-size="10.5" fill="#444" textLength="21" lengthAdjust="spacingAndGlyphs" >クリア</text></svg>
<svg class="a" style="left:1316px;top:466px;" width="10" height="10" viewBox="0 0 10 10"><circle cx="5" cy="5" r="2.2" fill="#444"/><path d="M5,0V10M0,5H10M1.5,1.5L8.5,8.5M8.5,1.5L1.5,8.5" stroke="#444" stroke-width="0.9"/></svg>
<svg class="a" style="left:1335px;top:469px;" width="9" height="6" viewBox="0 0 9 6"><path d="M0,0H9L4.5,5Z" fill="#333"/></svg>
<div class="a" style="left:1167px;top:484px;width:278px;height:1px;background:#d8d8d8"></div>
<div class="a" style="left:1167px;top:488px;width:40px;height:20px;background:#fff"></div>
<svg class="a" style="left:1177px;top:490.9px;overflow:visible" width="21" height="16.8"><text x="0" y="12.1" font-family="Liberation Sans, sans-serif" font-size="10.5" fill="#1a1a1a" textLength="19" lengthAdjust="spacingAndGlyphs" >配色</text></svg>
<div class="a" style="left:1167px;top:508px;width:278px;height:1px;background:#d6d6d6"></div>
<div class="a" style="left:1167px;top:507px;width:40px;height:2px;background:#9ec0e4"></div>
<div class="a" style="left:1168px;top:513px;width:277px;height:281px;background:#333"></div>
<div class="a" style="left:1169px;top:515px;width:275px;height:32px;border:1.5px solid #ddd;border-radius:5px"></div>
<div class="a" style="left:1171.5px;top:517.5px;width:14px;height:14px;background:#f7f5f0;border-radius:2.5px"></div>
<div class="a" style="left:1186.5px;top:517.5px;width:14px;height:14px;background:#a8d5c8;border-radius:2.5px"></div>
<div class="a" style="left:1201.5px;top:517.5px;width:14px;height:14px;background:#68ad98;border-radius:2.5px"></div>
<div class="a" style="left:1216.5px;top:517.5px;width:14px;height:14px;background:#84c0ad;border-radius:2.5px"></div>
<div class="a" style="left:1231.5px;top:517.5px;width:14px;height:14px;background:#55997f;border-radius:2.5px"></div>
<div class="a" style="left:1246.5px;top:517.5px;width:14px;height:14px;background:#f26e55;border-radius:2.5px"></div>
<svg class="a" style="left:1171px;top:532.1px;overflow:visible" width="36" height="15.2"><text x="0" y="10.9" font-family="Liberation Sans, sans-serif" font-size="9.5" fill="#e8e8e8" textLength="34" lengthAdjust="spacingAndGlyphs" >1: 配色1</text></svg>
<svg class="a" style="left:1173px;top:800px;" width="10" height="10" viewBox="0 0 10 10"><path d="M1,5H9M5,1V9" stroke="#333" stroke-width="1.5"/></svg>
<svg class="a" style="left:1191px;top:800px;" width="10" height="10" viewBox="0 0 10 10"><path d="M1,5H9" stroke="#333" stroke-width="1.5"/></svg>
<svg class="a" style="left:1211px;top:800px;" width="8" height="10" viewBox="0 0 8 10"><path d="M4,1V10M2,3L4,0.5L6,3" fill="none" stroke="#333" stroke-width="1.2"/></svg>
<svg class="a" style="left:1229px;top:800px;" width="8" height="10" viewBox="0 0 8 10"><path d="M4,0V9M2,7L4,9.5L6,7" fill="none" stroke="#333" stroke-width="1.2"/></svg>
<svg class="a" style="left:1247px;top:803px;" width="9" height="6" viewBox="0 0 9 6"><path d="M0,0H9L4.5,5Z" fill="#333"/></svg>
<svg class="a" style="left:6.5px;top:79px;overflow:visible" width="20" height="20" viewBox="0 0 20 20"><path d="M2,10L7,6V14Z" fill="#262626"/><path d="M6,10H17" stroke="#262626" stroke-width="1.6"/></svg><svg class="a" style="left:6.5px;top:106px;overflow:visible" width="20" height="20" viewBox="0 0 20 20"><path d="M3,3H6M3,3V7M3,12V17H6M11,3H16M11,17H16" fill="none" stroke="#262626" stroke-width="1.6"/></svg><svg class="a" style="left:6.5px;top:132px;overflow:visible" width="20" height="20" viewBox="0 0 20 20"><circle cx="10" cy="10" r="6.5" fill="none" stroke="#262626" stroke-width="1.6"/></svg><svg class="a" style="left:6.5px;top:160px;overflow:visible" width="20" height="20" viewBox="0 0 20 20"><circle cx="10" cy="10" r="6.5" fill="none" stroke="#262626" stroke-width="1.6" stroke-dasharray="3.5 2"/><circle cx="10" cy="10" r="1.5" fill="#262626"/></svg><svg class="a" style="left:6.5px;top:187px;overflow:visible" width="20" height="20" viewBox="0 0 20 20"><circle cx="10" cy="10" r="6.5" fill="none" stroke="#262626" stroke-width="1.6" stroke-dasharray="3.5 2"/><circle cx="10" cy="10" r="1.5" fill="#262626"/></svg><svg class="a" style="left:6.5px;top:212px;overflow:visible" width="20" height="20" viewBox="0 0 20 20"><path d="M7,2V16H13M3,6H11" fill="none" stroke="#262626" stroke-width="2.4"/></svg><svg class="a" style="left:6.5px;top:238.5px;overflow:visible" width="20" height="20" viewBox="0 0 20 20"><rect x="-2.2" y="-1.6" width="24" height="24.7" rx="3" fill="#d2d2d2"/><path d="M4,9L11,5L15,13L8,17Z" fill="none" stroke="#262626" stroke-width="1.5"/></svg><svg class="a" style="left:6.5px;top:267px;overflow:visible" width="20" height="20" viewBox="0 0 20 20"><path d="M3.5,16.5L12,8" stroke="#262626" stroke-width="4.4" stroke-linecap="round"/><path d="M4,16L11.5,8.5" stroke="#f0f0f0" stroke-width="2" stroke-linecap="round"/><path d="M10.2,6.2L14.8,10.8" stroke="#262626" stroke-width="2.4"/><path d="M11.5,5.8L14,3.2A2,2 0 0 1 16.8,6L14.2,8.5Z" fill="#262626"/></svg><svg class="a" style="left:6.5px;top:292.5px;overflow:visible" width="20" height="20" viewBox="0 0 20 20"><path d="M9,12.8L17.6,3.6L19,5L11.2,13.8Z" fill="#262626"/><path d="M1.8,17.6C2.4,14 4.6,12 7.2,12.3C9.2,12.6 10.6,14.2 9.6,15.8C8.5,17.3 5.5,18.2 1.8,17.6Z" fill="#262626"/></svg><svg class="a" style="left:6.5px;top:320px;overflow:visible" width="20" height="20" viewBox="0 0 20 20"><circle cx="10" cy="5" r="3.3" fill="#262626"/><rect x="8.3" y="6" width="3.4" height="4" fill="#262626"/><rect x="2.3" y="9.6" width="15.4" height="5" rx="1.5" fill="#262626"/><rect x="2.3" y="16" width="15.4" height="1.9" fill="#262626"/></svg><svg class="a" style="left:6.5px;top:346px;overflow:visible" width="20" height="20" viewBox="0 0 20 20"><g transform="translate(10.7,10.2) rotate(-40)"><rect x="-10" y="-4.3" width="20" height="8.6" rx="1.8" fill="#fff" stroke="#262626" stroke-width="1.5"/><path d="M-1.5,-5H8.2A1.8,1.8 0 0 1 10,-3.2V3.2A1.8,1.8 0 0 1 8.2,5H-1.5Z" fill="#262626"/></g></svg><svg class="a" style="left:6.5px;top:372px;overflow:visible" width="20" height="20" viewBox="0 0 20 20"><path d="M10.4,2.6L18,9.6L8.6,18.4L1.6,11.4Z" fill="none" stroke="#262626" stroke-width="1.5" stroke-linejoin="round"/><path d="M5.8,1.8L11,8.4" stroke="#262626" stroke-width="1.3"/><circle cx="5.6" cy="1.8" r="1.3" fill="none" stroke="#262626" stroke-width="1"/><path d="M17.6,11.5L19.6,15.2A2,2 0 0 1 15.6,15.2Z" fill="#262626"/></svg><svg class="a" style="left:6.5px;top:399px;overflow:visible" width="20" height="20" viewBox="0 0 20 20"><path d="M10.4,2.6L18,9.6L8.6,18.4L1.6,11.4Z" fill="none" stroke="#262626" stroke-width="1.5" stroke-linejoin="round"/><path d="M5.8,1.8L11,8.4" stroke="#262626" stroke-width="1.3"/><circle cx="5.6" cy="1.8" r="1.3" fill="none" stroke="#262626" stroke-width="1"/><rect x="12" y="11.5" width="7.5" height="7.5" fill="#fff"/><rect x="12" y="11.5" width="3.75" height="3.75" fill="#262626"/><rect x="15.75" y="15.25" width="3.75" height="3.75" fill="#262626"/><rect x="15.75" y="11.5" width="3.75" height="3.75" fill="#000"/></svg><svg class="a" style="left:6.5px;top:426px;overflow:visible" width="20" height="20" viewBox="0 0 20 20"><rect x="1.8" y="4.2" width="16.8" height="10.6" fill="none" stroke="#262626" stroke-width="1.3"/><path d="M3.5,12L5.2,8L7,12L8.8,8L10.6,12L12.4,8L14.2,12L16,8L17.2,11" fill="none" stroke="#262626" stroke-width="1.2"/></svg><svg class="a" style="left:6.5px;top:452px;overflow:visible" width="20" height="20" viewBox="0 0 20 20"><rect x="1.8" y="4.6" width="16.8" height="11.6" fill="#c9c9c9" stroke="#262626" stroke-width="1.3"/></svg><svg class="a" style="left:6.5px;top:478px;overflow:visible" width="20" height="20" viewBox="0 0 20 20"><path d="M1.6,12.5L11,9.6L18.8,18.4H3Z" fill="#4a4a4a"/><path d="M7.5,13L9.5,6L15.5,2.2L18.5,5.2L14.8,11.2Z" fill="#fff" stroke="#262626" stroke-width="1.4" stroke-linejoin="round"/><path d="M8,12.5L12.5,8" stroke="#262626" stroke-width="1.1"/><path d="M15.5,1.5L19,5" stroke="#262626" stroke-width="2.2"/></svg><svg class="a" style="left:6.5px;top:505px;overflow:visible" width="20" height="20" viewBox="0 0 20 20"><path d="M10.6,2.4C8,6.5 3.8,10.5 3.8,13.5A6.8,6.8 0 0 0 17.4,13.5C17.4,10.5 13.2,6.5 10.6,2.4Z" fill="none" stroke="#262626" stroke-width="1.5"/></svg><svg class="a" style="left:6.5px;top:531px;overflow:visible" width="20" height="20" viewBox="0 0 20 20"><circle cx="13.1" cy="8.6" r="5.6" fill="#262626"/><path d="M9.6,12.2L3.4,18.4" stroke="#262626" stroke-width="1.9" stroke-linecap="round"/></svg><svg class="a" style="left:6.5px;top:558px;overflow:visible" width="20" height="20" viewBox="0 0 20 20"><path d="M3.8,7.8V4.2H17.2V7.8M10.5,4.2V18M6.8,18H14.2" fill="none" stroke="#262626" stroke-width="2.4"/></svg><svg class="a" style="left:6.5px;top:584px;overflow:visible" width="20" height="20" viewBox="0 0 20 20"><path d="M10,2L15.6,11.2L13.4,14.6H6.6L4.4,11.2Z" fill="none" stroke="#262626" stroke-width="1.5" stroke-linejoin="round"/><path d="M10,4V10" stroke="#262626" stroke-width="1.2"/><circle cx="10" cy="10.5" r="1" fill="#262626"/><rect x="6.6" y="15.4" width="6.8" height="3.4" fill="#262626"/></svg><svg class="a" style="left:6.5px;top:610.5px;overflow:visible" width="20" height="20" viewBox="0 0 20 20"><rect x="3.6" y="5.6" width="13.2" height="12.4" fill="none" stroke="#262626" stroke-width="1.5"/><path d="M10.2,5.6V18M3.6,11.8H16.8" stroke="#262626" stroke-width="1.5"/><circle cx="3.6" cy="5.6" r="1.8" fill="#262626"/><circle cx="16.8" cy="5.6" r="1.8" fill="#262626"/><circle cx="3.6" cy="18" r="1.8" fill="#262626"/><circle cx="16.8" cy="18" r="1.8" fill="#262626"/></svg><svg class="a" style="left:6.5px;top:637px;overflow:visible" width="20" height="20" viewBox="0 0 20 20"><path d="M5.6,11V5.5A1.2,1.2 0 0 1 8,5.5V10M8,9.5V3.6A1.2,1.2 0 0 1 10.4,3.6V9.5M10.4,9.5V4.2A1.2,1.2 0 0 1 12.8,4.2V9.5M12.8,9.8V6A1.2,1.2 0 0 1 15.2,6V13.5C15.2,17.8 12.8,20 9.6,20C7.2,20 6,18.8 4,15.5L2.5,12.8A1.2,1.2 0 0 1 4.6,11.6L5.6,13.2" fill="#fff" stroke="#262626" stroke-width="1.3" stroke-linejoin="round"/></svg><svg class="a" style="left:6.5px;top:664.5px;overflow:visible" width="20" height="20" viewBox="0 0 20 20"><circle cx="9.2" cy="9.6" r="5.9" fill="none" stroke="#262626" stroke-width="1.9"/><path d="M13.4,13.8L18.4,18.6" stroke="#262626" stroke-width="2.2"/></svg><svg class="a" style="left:6.5px;top:736px;overflow:visible" width="20" height="20" viewBox="0 0 20 20"><path d="M1.4,0.3H19.3V5.4H6.7V17.7H1.4Z" fill="#262626"/><path d="M9,2.6V5.4M11.6,2.6V5.4M14.2,2.6V5.4M16.8,2.6V5.4M4,8.2H6.7M4,10.8H6.7M4,13.4H6.7M4,16H6.7" stroke="#f0f0f0" stroke-width="0.9"/></svg><svg class="a" style="left:6.5px;top:761.5px;overflow:visible" width="20" height="20" viewBox="0 0 20 20"><rect x="1.5" y="3.2" width="18" height="14.2" fill="#f6f6f6" stroke="#262626" stroke-width="1.3"/><circle cx="9.8" cy="10.2" r="5.2" fill="none" stroke="#262626" stroke-width="1.1" stroke-dasharray="1.6 1.2"/></svg><div class="a" style="left:11px;top:799.5px;width:12.2px;height:1.8px;background:#333"></div>
<div class="a" style="left:14px;top:16px;width:268px;height:275px;background:#fff;border-radius:40px"></div>
<svg class="a" style="left:0px;top:0px;" width="300" height="300" viewBox="0 0 300 300"><g transform="translate(146.2,158.4) rotate(-17.7)"><rect x="-80.1" y="-65.3" width="160.2" height="130.6" fill="none" stroke="#2d2f2f" stroke-width="11.2"/></g>
<path d="M87.3,153.4 L117.9,134.4 L126.5,99.4 L154,122.7 L190,120 L176.4,153.4 L190,186.8 L154,184.1 L126.5,207.4 L117.9,172.4Z" fill="#2d2f2f"/>
<path d="M64.2,103 L100.5,80.3 L110.8,38.8 L143.6,66.3 L186.3,63.3 L170.3,103 L168.9,130 L143.6,139.7 L110.8,167.2 L100.5,125.7Z" fill="#2d2f2f"/>
<path d="M85.7,103 L109.9,87.2 L117.5,59.3 L140,77.4 L168.9,76 L158.6,103 L168.9,130 L140,128.6 L117.5,146.7 L109.9,118.8Z" fill="#fff"/></svg>
</div>
<div class="a" style="left:0px;top:814px;width:1450px;height:2px;background:#3c4a63"></div>
</body></html>
